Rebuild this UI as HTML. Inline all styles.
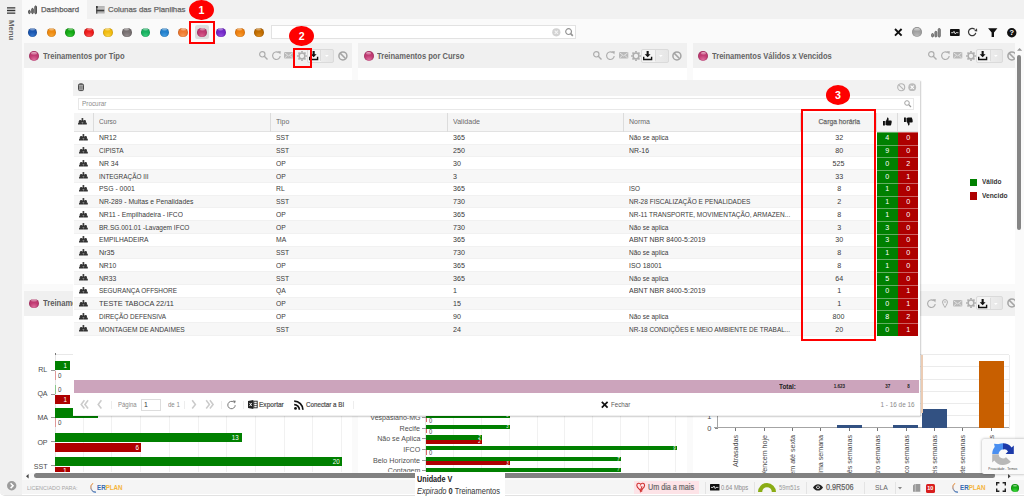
<!DOCTYPE html>
<html lang="pt-BR"><head><meta charset="utf-8"><title>Dashboard</title>
<style>
*{box-sizing:border-box;margin:0;padding:0}
html,body{width:1024px;height:497px;overflow:hidden;background:#fafafa}
body{font-family:"Liberation Sans",sans-serif;font-size:8px;color:#333;position:relative}
.a{position:absolute}
.t{position:absolute;white-space:nowrap;line-height:1}
svg{position:absolute;overflow:visible}
.sph{position:absolute;border-radius:50%}
.sph:after{content:"";position:absolute;left:24%;top:7%;width:52%;height:30%;border-radius:50%;background:linear-gradient(rgba(255,255,255,.62),rgba(255,255,255,.1))}
</style></head><body>

<div class="a" style="left:0.00px;top:0.00px;width:22.00px;height:480.00px;background:#f0f0f0;"></div>
<div class="a" style="left:22.00px;top:0.00px;width:1002.00px;height:18.60px;background:#f1f1f1;"></div>
<div class="a" style="left:22.00px;top:0.00px;width:65.00px;height:19.00px;background:#fafafa;"></div>
<svg style="left:7.40px;top:7.30px" width="9" height="8" viewBox="0 0 9 8"><path d="M0 .9h8.300M0 3.500h8.300M0 6.100h8.300" stroke="#333" stroke-width="1.400"/></svg>
<div class="t" style="left:7px;top:19.700px;font-size:7.700px;font-weight:bold;color:#666;writing-mode:vertical-rl">Menu</div>
<svg style="left:28.00px;top:5.00px" width="10" height="9.5" viewBox="0 0 10 9.5"><g fill="#8a8a8a" stroke="#3c3c3c" stroke-width=".900"><rect x=".650" y="5.300" width="1.500" height="3.300" rx=".750"/><rect x="3.750" y="3.400" width="1.500" height="5.200" rx=".750"/><rect x="6.850" y=".950" width="1.600" height="7.800" rx=".800"/></g></svg>
<div class="t" style="left:41.40px;top:6.00px;font-size:8.00px;color:#5e5e5e;transform:scaleX(0.971);transform-origin:0 50%;-webkit-text-stroke:.25px #5e5e5e;">Dashboard</div>
<svg style="left:96.20px;top:5.90px" width="9" height="8" viewBox="0 0 9 8"><rect x="0" y="0" width="8.700" height="7.600" rx=".600" fill="#b4b4b4"/><path d="M1.600 2.200h7.100" stroke="#d4d4d4" stroke-width=".600"/><rect x="0" y="0" width="1.400" height="7.600" fill="#5a5a5a"/><rect x=".400" y="3.800" width="7.800" height="1.500" fill="#3c3c3c"/><rect x=".300" y=".200" width="1.300" height="1.700" fill="#222"/></svg>
<div class="t" style="left:108.20px;top:6.00px;font-size:8.00px;color:#666;transform:scaleX(0.979);transform-origin:0 50%;-webkit-text-stroke:.25px #666;">Colunas das Planilhas</div>
<div class="a" style="left:195.00px;top:25.00px;width:14.00px;height:14.00px;background:#dddddd;border-radius:2px"></div>
<div class="sph" style="left:27.65px;top:27.55px;width:9.7px;height:9.7px;background:radial-gradient(circle at 50% 92%,#3a7ad0 0%,rgba(255,255,255,0) 48%),radial-gradient(circle at 50% 50%,#1a56b0 0%,#1a56b0 50%,#123c84 100%);box-shadow:inset 0 0 1px rgba(0,0,0,.4)"></div>
<div class="sph" style="left:46.50px;top:27.55px;width:9.7px;height:9.7px;background:radial-gradient(circle at 50% 92%,#f8a838 0%,rgba(255,255,255,0) 48%),radial-gradient(circle at 50% 50%,#ee8a10 0%,#ee8a10 50%,#c86c08 100%);box-shadow:inset 0 0 1px rgba(0,0,0,.4)"></div>
<div class="sph" style="left:65.35px;top:27.55px;width:9.7px;height:9.7px;background:radial-gradient(circle at 50% 92%,#3cc83c 0%,rgba(255,255,255,0) 48%),radial-gradient(circle at 50% 50%,#14a814 0%,#14a814 50%,#0c8010 100%);box-shadow:inset 0 0 1px rgba(0,0,0,.4)"></div>
<div class="sph" style="left:84.20px;top:27.55px;width:9.7px;height:9.7px;background:radial-gradient(circle at 50% 92%,#f85050 0%,rgba(255,255,255,0) 48%),radial-gradient(circle at 50% 50%,#ee1c1c 0%,#ee1c1c 50%,#c01010 100%);box-shadow:inset 0 0 1px rgba(0,0,0,.4)"></div>
<div class="sph" style="left:103.05px;top:27.55px;width:9.7px;height:9.7px;background:radial-gradient(circle at 50% 92%,#f8d448 0%,rgba(255,255,255,0) 48%),radial-gradient(circle at 50% 50%,#f2bc10 0%,#f2bc10 50%,#d09808 100%);box-shadow:inset 0 0 1px rgba(0,0,0,.4)"></div>
<div class="sph" style="left:121.90px;top:27.55px;width:9.7px;height:9.7px;background:radial-gradient(circle at 50% 92%,#958e8f 0%,rgba(255,255,255,0) 48%),radial-gradient(circle at 50% 50%,#777071 0%,#777071 50%,#5a5556 100%);box-shadow:inset 0 0 1px rgba(0,0,0,.4)"></div>
<div class="sph" style="left:140.75px;top:27.55px;width:9.7px;height:9.7px;background:radial-gradient(circle at 50% 92%,#3cd080 0%,rgba(255,255,255,0) 48%),radial-gradient(circle at 50% 50%,#18b060 0%,#18b060 50%,#0e8848 100%);box-shadow:inset 0 0 1px rgba(0,0,0,.4)"></div>
<div class="sph" style="left:159.60px;top:27.55px;width:9.7px;height:9.7px;background:radial-gradient(circle at 50% 92%,#48a0e4 0%,rgba(255,255,255,0) 48%),radial-gradient(circle at 50% 50%,#2280cc 0%,#2280cc 50%,#1660a4 100%);box-shadow:inset 0 0 1px rgba(0,0,0,.4)"></div>
<div class="sph" style="left:178.45px;top:27.55px;width:9.7px;height:9.7px;background:radial-gradient(circle at 50% 92%,#f89c58 0%,rgba(255,255,255,0) 48%),radial-gradient(circle at 50% 50%,#ee7a30 0%,#ee7a30 50%,#c85c1c 100%);box-shadow:inset 0 0 1px rgba(0,0,0,.4)"></div>
<div class="sph" style="left:197.30px;top:27.55px;width:9.7px;height:9.7px;background:radial-gradient(circle at 50% 92%,#dc6090 0%,rgba(255,255,255,0) 48%),radial-gradient(circle at 50% 50%,#c03a72 0%,#c03a72 50%,#982858 100%);box-shadow:inset 0 0 1px rgba(0,0,0,.4)"></div>
<div class="sph" style="left:216.15px;top:27.55px;width:9.7px;height:9.7px;background:radial-gradient(circle at 50% 92%,#9450e0 0%,rgba(255,255,255,0) 48%),radial-gradient(circle at 50% 50%,#7428c8 0%,#7428c8 50%,#5418a0 100%);box-shadow:inset 0 0 1px rgba(0,0,0,.4)"></div>
<div class="sph" style="left:235.00px;top:27.55px;width:9.7px;height:9.7px;background:radial-gradient(circle at 50% 92%,#f8a038 0%,rgba(255,255,255,0) 48%),radial-gradient(circle at 50% 50%,#ee8010 0%,#ee8010 50%,#c86408 100%);box-shadow:inset 0 0 1px rgba(0,0,0,.4)"></div>
<div class="sph" style="left:253.85px;top:27.55px;width:9.7px;height:9.7px;background:radial-gradient(circle at 50% 92%,#dc8c20 0%,rgba(255,255,255,0) 48%),radial-gradient(circle at 50% 50%,#c06c00 0%,#c06c00 50%,#985400 100%);box-shadow:inset 0 0 1px rgba(0,0,0,.4)"></div>
<div class="a" style="left:270.50px;top:25.20px;width:305.30px;height:14.00px;background:#fff;border:1px solid #e2e2e2"></div>
<svg style="left:551.50px;top:27.80px" width="9" height="9" viewBox="0 0 9 9"><circle cx="4.300" cy="4.300" r="4.100" fill="#d2d2d2"/><path d="M2.700 2.700l3.200 3.200M5.900 2.700L2.700 5.900" stroke="#f4f4f4" stroke-width="1.100"/></svg>
<svg style="left:564.80px;top:28.10px" width="9" height="9" viewBox="0 0 9 9"><circle cx="3.600" cy="3.600" r="2.900" fill="none" stroke="#949494" stroke-width="1.200"/><path d="M5.700 5.700L7.800 7.800" stroke="#949494" stroke-width="1.700"/></svg>
<svg style="left:894.00px;top:28.00px" width="9" height="9" viewBox="0 0 9 9"><path d="M1 1l6.600 6.600M7.600 1L1 7.600" stroke="#111" stroke-width="1.900"/></svg>
<div class="sph" style="left:912.00px;top:27.30px;width:10.0px;height:10.0px;background:radial-gradient(circle at 50% 92%,#bcbcbc 0%,rgba(255,255,255,0) 48%),radial-gradient(circle at 50% 50%,#a0a0a0 0%,#a0a0a0 50%,#8c8c8c 100%);box-shadow:inset 0 0 1px rgba(0,0,0,.4)"></div>
<svg style="left:931.00px;top:27.50px" width="10" height="9.5" viewBox="0 0 10 9.5"><g fill="#8c8c8c" stroke="#5c5c5c" stroke-width=".800"><rect x=".600" y="5.500" width="1.900" height="3.500" rx=".950"/><rect x="3.900" y="3.300" width="1.900" height="5.700" rx=".950"/><rect x="7.200" y=".500" width="2.100" height="8.600" rx="1"/></g></svg>
<svg style="left:950.00px;top:29.00px" width="10" height="7" viewBox="0 0 10 7"><rect width="9.700" height="7" rx=".800" fill="#111"/><path d="M1.200 3.700h2l.800-1.400 1.200 2.600.900-1.200h2.300" stroke="#fff" stroke-width=".800" fill="none"/></svg>
<svg style="left:968.30px;top:27.40px" width="10" height="10" viewBox="0 0 10 10"><path d="M7.770 5.960A3.700 3.700 0 1 1 6.820 2.380" fill="none" stroke="#3a3a3a" stroke-width="1.250"/><path d="M9 1.200l.200 3.300-3.100-.500z" fill="#3a3a3a"/></svg>
<svg style="left:987.60px;top:27.70px" width="10" height="10" viewBox="0 0 10 10"><path d="M.100 .300h9.300L6 4.400v4.600H3.600V4.400z" fill="#111"/></svg>
<svg style="left:1006.60px;top:27.60px" width="10" height="10" viewBox="0 0 10 10"><circle cx="4.750" cy="4.750" r="4.700" fill="#111"/><text x="4.750" y="7.400" font-size="7.400" font-weight="bold" fill="#fff" text-anchor="middle" font-family="Liberation Sans, sans-serif">?</text></svg>
<div class="a" style="left:23.70px;top:43.00px;width:328.40px;height:25.00px;background:#f0f0f0;"></div>
<div class="a" style="left:23.70px;top:68.00px;width:328.40px;height:216.00px;background:#fff;"></div>
<div class="sph" style="left:29.10px;top:50.90px;width:9.8px;height:9.8px;background:radial-gradient(circle at 50% 92%,#e070a0 0%,rgba(255,255,255,0) 48%),radial-gradient(circle at 50% 50%,#c03a72 0%,#c03a72 50%,#982858 100%);box-shadow:inset 0 0 1px rgba(0,0,0,.4)"></div>
<div class="t" style="left:42.70px;top:53.00px;font-size:8.20px;color:#646464;transform:scaleX(0.926);transform-origin:0 50%;font-weight:bold;">Treinamentos por Tipo</div>
<svg style="left:337.50px;top:50.75px" width="10" height="10" viewBox="0 0 10 10"><circle cx="4.900" cy="4.900" r="4" fill="none" stroke="#a4a4a4" stroke-width="1.500"/><path d="M2.100 2.100l5.600 5.600" stroke="#a4a4a4" stroke-width="1.500"/></svg>
<div class="a" style="left:306.70px;top:48.65px;width:27.300px;height:14px;border:1px solid #dadada;border-radius:2px;background:linear-gradient(90deg,#f4f4f4 0,#f4f4f4 50%,#ececec 51%,#e6e6e6 100%)"></div>
<div class="a" style="left:320.40px;top:50.25px;width:1.00px;height:10.80px;background:#dcdcdc;"></div>
<svg style="left:324.80px;top:54.95px" width="4" height="3" viewBox="0 0 4 3"><path d="M0 0h3.700L1.850 2.100z" fill="#fff"/></svg>
<svg style="left:308.50px;top:50.85px" width="10" height="10" viewBox="0 0 10 10"><path d="M3.600 0h2.100v3.200h1.900L4.650 6.300 1.700 3.200h1.900z" fill="#111"/><path d="M.700 5.800v2.700h7.900V5.800" fill="none" stroke="#111" stroke-width="1.400"/></svg>
<svg style="left:296.80px;top:50.65px" width="10" height="10" viewBox="0 0 10 10"><circle cx="5" cy="5" r="2.900" fill="none" stroke="#adadad" stroke-width="1.500"/><g stroke="#adadad" stroke-width="1.700"><path d="M5 .1v1.500M5 8.400v1.500M.1 5h1.500M8.400 5h1.500M1.500 1.500l1.100 1.100M7.400 7.400l1.100 1.100M1.500 8.500l1.100-1.100M7.400 2.600l1.100-1.100"/></g></svg>
<svg style="left:284.20px;top:52.35px" width="10" height="7" viewBox="0 0 10 7"><rect width="9.300" height="6.600" rx=".800" fill="#b9b9b9"/><path d="M.600 .800l4.050 3.100 4.050-3.100M.600 6l2.900-2.600M8.700 6L5.800 3.400" stroke="#ececec" stroke-width=".750" fill="none"/></svg>
<svg style="left:271.50px;top:51.05px" width="10" height="10" viewBox="0 0 10 10"><path d="M8.200 5A3.800 3.800 0 1 1 6.700 1.700" fill="none" stroke="#adadad" stroke-width="1.150"/><path d="M5.600 .200l3.300 .100-.600 3.200z" fill="#adadad"/></svg>
<svg style="left:258.80px;top:51.25px" width="10" height="10" viewBox="0 0 10 10"><circle cx="3.300" cy="3.300" r="2.700" fill="none" stroke="#adadad" stroke-width="1.150"/><path d="M5.300 5.300L8.500 8.500" stroke="#adadad" stroke-width="1.400"/></svg>
<div class="a" style="left:23.70px;top:291.20px;width:328.40px;height:24.40px;background:#f0f0f0;"></div>
<div class="a" style="left:23.70px;top:315.60px;width:328.40px;height:158.00px;background:#fff;"></div>
<div class="sph" style="left:29.10px;top:298.60px;width:9.8px;height:9.8px;background:radial-gradient(circle at 50% 92%,#e070a0 0%,rgba(255,255,255,0) 48%),radial-gradient(circle at 50% 50%,#c03a72 0%,#c03a72 50%,#982858 100%);box-shadow:inset 0 0 1px rgba(0,0,0,.4)"></div>
<div class="t" style="left:42.70px;top:300.00px;font-size:8.20px;color:#5c5c5c;transform:scaleX(0.935);transform-origin:0 50%;font-weight:bold;">Treinamentos por Situação</div>
<svg style="left:337.50px;top:298.40px" width="10" height="10" viewBox="0 0 10 10"><circle cx="4.900" cy="4.900" r="4" fill="none" stroke="#a4a4a4" stroke-width="1.500"/><path d="M2.100 2.100l5.600 5.600" stroke="#a4a4a4" stroke-width="1.500"/></svg>
<div class="a" style="left:306.70px;top:296.30px;width:27.300px;height:14px;border:1px solid #dadada;border-radius:2px;background:linear-gradient(90deg,#f4f4f4 0,#f4f4f4 50%,#ececec 51%,#e6e6e6 100%)"></div>
<div class="a" style="left:320.40px;top:297.90px;width:1.00px;height:10.80px;background:#dcdcdc;"></div>
<svg style="left:324.80px;top:302.60px" width="4" height="3" viewBox="0 0 4 3"><path d="M0 0h3.700L1.850 2.100z" fill="#fff"/></svg>
<svg style="left:308.50px;top:298.50px" width="10" height="10" viewBox="0 0 10 10"><path d="M3.600 0h2.100v3.200h1.900L4.650 6.300 1.700 3.200h1.900z" fill="#111"/><path d="M.700 5.800v2.700h7.900V5.800" fill="none" stroke="#111" stroke-width="1.400"/></svg>
<svg style="left:296.80px;top:298.30px" width="10" height="10" viewBox="0 0 10 10"><circle cx="5" cy="5" r="2.900" fill="none" stroke="#adadad" stroke-width="1.500"/><g stroke="#adadad" stroke-width="1.700"><path d="M5 .1v1.500M5 8.400v1.500M.1 5h1.500M8.400 5h1.500M1.500 1.500l1.100 1.100M7.400 7.400l1.100 1.100M1.500 8.500l1.100-1.100M7.400 2.600l1.100-1.100"/></g></svg>
<svg style="left:284.20px;top:300.00px" width="10" height="7" viewBox="0 0 10 7"><rect width="9.300" height="6.600" rx=".800" fill="#b9b9b9"/><path d="M.600 .800l4.050 3.100 4.050-3.100M.600 6l2.900-2.600M8.700 6L5.800 3.400" stroke="#ececec" stroke-width=".750" fill="none"/></svg>
<svg style="left:272.70px;top:298.70px" width="7" height="10" viewBox="0 0 7 10"><path d="M3 .600a2.450 2.450 0 0 1 2.450 2.450c0 1.800-2.450 5.400-2.450 5.400S.550 4.850 .550 3.050A2.450 2.450 0 0 1 3 .600z" fill="none" stroke="#adadad" stroke-width="1"/><circle cx="3" cy="3" r=".800" fill="#adadad"/></svg>
<svg style="left:258.10px;top:298.70px" width="10" height="10" viewBox="0 0 10 10"><path d="M8.200 5A3.800 3.800 0 1 1 6.700 1.700" fill="none" stroke="#adadad" stroke-width="1.150"/><path d="M5.600 .200l3.300 .100-.600 3.200z" fill="#adadad"/></svg>
<div class="a" style="left:358.40px;top:43.00px;width:328.30px;height:25.00px;background:#f0f0f0;"></div>
<div class="a" style="left:358.40px;top:68.00px;width:328.30px;height:216.00px;background:#fff;"></div>
<div class="sph" style="left:363.80px;top:50.90px;width:9.8px;height:9.8px;background:radial-gradient(circle at 50% 92%,#e070a0 0%,rgba(255,255,255,0) 48%),radial-gradient(circle at 50% 50%,#c03a72 0%,#c03a72 50%,#982858 100%);box-shadow:inset 0 0 1px rgba(0,0,0,.4)"></div>
<div class="t" style="left:377.40px;top:53.00px;font-size:8.20px;color:#646464;transform:scaleX(0.922);transform-origin:0 50%;font-weight:bold;">Treinamentos por Curso</div>
<svg style="left:672.10px;top:50.75px" width="10" height="10" viewBox="0 0 10 10"><circle cx="4.900" cy="4.900" r="4" fill="none" stroke="#a4a4a4" stroke-width="1.500"/><path d="M2.100 2.100l5.600 5.600" stroke="#a4a4a4" stroke-width="1.500"/></svg>
<div class="a" style="left:641.30px;top:48.65px;width:27.300px;height:14px;border:1px solid #dadada;border-radius:2px;background:linear-gradient(90deg,#f4f4f4 0,#f4f4f4 50%,#ececec 51%,#e6e6e6 100%)"></div>
<div class="a" style="left:655.00px;top:50.25px;width:1.00px;height:10.80px;background:#dcdcdc;"></div>
<svg style="left:659.40px;top:54.95px" width="4" height="3" viewBox="0 0 4 3"><path d="M0 0h3.700L1.850 2.100z" fill="#fff"/></svg>
<svg style="left:643.10px;top:50.85px" width="10" height="10" viewBox="0 0 10 10"><path d="M3.600 0h2.100v3.200h1.900L4.650 6.300 1.700 3.200h1.900z" fill="#111"/><path d="M.700 5.800v2.700h7.900V5.800" fill="none" stroke="#111" stroke-width="1.400"/></svg>
<svg style="left:631.40px;top:50.65px" width="10" height="10" viewBox="0 0 10 10"><circle cx="5" cy="5" r="2.900" fill="none" stroke="#adadad" stroke-width="1.500"/><g stroke="#adadad" stroke-width="1.700"><path d="M5 .1v1.500M5 8.400v1.500M.1 5h1.500M8.400 5h1.500M1.500 1.500l1.100 1.100M7.400 7.400l1.100 1.100M1.500 8.500l1.100-1.100M7.400 2.600l1.100-1.100"/></g></svg>
<svg style="left:618.80px;top:52.35px" width="10" height="7" viewBox="0 0 10 7"><rect width="9.300" height="6.600" rx=".800" fill="#b9b9b9"/><path d="M.600 .800l4.050 3.100 4.050-3.100M.600 6l2.900-2.600M8.700 6L5.800 3.400" stroke="#ececec" stroke-width=".750" fill="none"/></svg>
<svg style="left:606.10px;top:51.05px" width="10" height="10" viewBox="0 0 10 10"><path d="M8.200 5A3.800 3.800 0 1 1 6.700 1.700" fill="none" stroke="#adadad" stroke-width="1.150"/><path d="M5.600 .200l3.300 .100-.600 3.200z" fill="#adadad"/></svg>
<svg style="left:593.40px;top:51.25px" width="10" height="10" viewBox="0 0 10 10"><circle cx="3.300" cy="3.300" r="2.700" fill="none" stroke="#adadad" stroke-width="1.150"/><path d="M5.300 5.300L8.500 8.500" stroke="#adadad" stroke-width="1.400"/></svg>
<div class="a" style="left:358.40px;top:291.20px;width:328.30px;height:24.40px;background:#f0f0f0;"></div>
<div class="a" style="left:358.40px;top:315.60px;width:328.30px;height:158.00px;background:#fff;"></div>
<div class="sph" style="left:363.80px;top:298.60px;width:9.8px;height:9.8px;background:radial-gradient(circle at 50% 92%,#e070a0 0%,rgba(255,255,255,0) 48%),radial-gradient(circle at 50% 50%,#c03a72 0%,#c03a72 50%,#982858 100%);box-shadow:inset 0 0 1px rgba(0,0,0,.4)"></div>
<div class="t" style="left:377.40px;top:300.00px;font-size:8.20px;color:#5c5c5c;transform:scaleX(0.935);transform-origin:0 50%;font-weight:bold;">Treinamentos por Unidade</div>
<svg style="left:672.10px;top:298.40px" width="10" height="10" viewBox="0 0 10 10"><circle cx="4.900" cy="4.900" r="4" fill="none" stroke="#a4a4a4" stroke-width="1.500"/><path d="M2.100 2.100l5.600 5.600" stroke="#a4a4a4" stroke-width="1.500"/></svg>
<div class="a" style="left:641.30px;top:296.30px;width:27.300px;height:14px;border:1px solid #dadada;border-radius:2px;background:linear-gradient(90deg,#f4f4f4 0,#f4f4f4 50%,#ececec 51%,#e6e6e6 100%)"></div>
<div class="a" style="left:655.00px;top:297.90px;width:1.00px;height:10.80px;background:#dcdcdc;"></div>
<svg style="left:659.40px;top:302.60px" width="4" height="3" viewBox="0 0 4 3"><path d="M0 0h3.700L1.850 2.100z" fill="#fff"/></svg>
<svg style="left:643.10px;top:298.50px" width="10" height="10" viewBox="0 0 10 10"><path d="M3.600 0h2.100v3.200h1.900L4.650 6.300 1.700 3.200h1.900z" fill="#111"/><path d="M.700 5.800v2.700h7.900V5.800" fill="none" stroke="#111" stroke-width="1.400"/></svg>
<svg style="left:631.40px;top:298.30px" width="10" height="10" viewBox="0 0 10 10"><circle cx="5" cy="5" r="2.900" fill="none" stroke="#adadad" stroke-width="1.500"/><g stroke="#adadad" stroke-width="1.700"><path d="M5 .1v1.500M5 8.400v1.500M.1 5h1.500M8.400 5h1.500M1.500 1.500l1.100 1.100M7.400 7.400l1.100 1.100M1.500 8.500l1.100-1.100M7.400 2.600l1.100-1.100"/></g></svg>
<svg style="left:618.80px;top:300.00px" width="10" height="7" viewBox="0 0 10 7"><rect width="9.300" height="6.600" rx=".800" fill="#b9b9b9"/><path d="M.600 .800l4.050 3.100 4.050-3.100M.600 6l2.900-2.600M8.700 6L5.800 3.400" stroke="#ececec" stroke-width=".750" fill="none"/></svg>
<svg style="left:607.30px;top:298.70px" width="7" height="10" viewBox="0 0 7 10"><path d="M3 .600a2.450 2.450 0 0 1 2.450 2.450c0 1.800-2.450 5.400-2.450 5.400S.550 4.850 .550 3.050A2.450 2.450 0 0 1 3 .600z" fill="none" stroke="#adadad" stroke-width="1"/><circle cx="3" cy="3" r=".800" fill="#adadad"/></svg>
<svg style="left:592.70px;top:298.70px" width="10" height="10" viewBox="0 0 10 10"><path d="M8.200 5A3.800 3.800 0 1 1 6.700 1.700" fill="none" stroke="#adadad" stroke-width="1.150"/><path d="M5.600 .200l3.300 .100-.600 3.200z" fill="#adadad"/></svg>
<div class="a" style="left:692.90px;top:43.00px;width:328.30px;height:25.00px;background:#f0f0f0;"></div>
<div class="a" style="left:692.90px;top:68.00px;width:328.30px;height:216.00px;background:#fff;"></div>
<div class="sph" style="left:698.30px;top:50.90px;width:9.8px;height:9.8px;background:radial-gradient(circle at 50% 92%,#e070a0 0%,rgba(255,255,255,0) 48%),radial-gradient(circle at 50% 50%,#c03a72 0%,#c03a72 50%,#982858 100%);box-shadow:inset 0 0 1px rgba(0,0,0,.4)"></div>
<div class="t" style="left:711.90px;top:53.00px;font-size:8.20px;color:#646464;transform:scaleX(0.924);transform-origin:0 50%;font-weight:bold;">Treinamentos Válidos x Vencidos</div>
<svg style="left:1006.60px;top:50.75px" width="10" height="10" viewBox="0 0 10 10"><circle cx="4.900" cy="4.900" r="4" fill="none" stroke="#a4a4a4" stroke-width="1.500"/><path d="M2.100 2.100l5.600 5.600" stroke="#a4a4a4" stroke-width="1.500"/></svg>
<div class="a" style="left:975.80px;top:48.65px;width:27.300px;height:14px;border:1px solid #dadada;border-radius:2px;background:linear-gradient(90deg,#f4f4f4 0,#f4f4f4 50%,#ececec 51%,#e6e6e6 100%)"></div>
<div class="a" style="left:989.50px;top:50.25px;width:1.00px;height:10.80px;background:#dcdcdc;"></div>
<svg style="left:993.90px;top:54.95px" width="4" height="3" viewBox="0 0 4 3"><path d="M0 0h3.700L1.850 2.100z" fill="#fff"/></svg>
<svg style="left:977.60px;top:50.85px" width="10" height="10" viewBox="0 0 10 10"><path d="M3.600 0h2.100v3.200h1.900L4.650 6.300 1.700 3.200h1.900z" fill="#111"/><path d="M.700 5.800v2.700h7.900V5.800" fill="none" stroke="#111" stroke-width="1.400"/></svg>
<svg style="left:965.90px;top:50.65px" width="10" height="10" viewBox="0 0 10 10"><circle cx="5" cy="5" r="2.900" fill="none" stroke="#adadad" stroke-width="1.500"/><g stroke="#adadad" stroke-width="1.700"><path d="M5 .1v1.500M5 8.400v1.500M.1 5h1.500M8.400 5h1.500M1.500 1.500l1.100 1.100M7.400 7.400l1.100 1.100M1.500 8.500l1.100-1.100M7.400 2.600l1.100-1.100"/></g></svg>
<svg style="left:953.30px;top:52.35px" width="10" height="7" viewBox="0 0 10 7"><rect width="9.300" height="6.600" rx=".800" fill="#b9b9b9"/><path d="M.600 .800l4.050 3.100 4.050-3.100M.600 6l2.900-2.600M8.700 6L5.800 3.400" stroke="#ececec" stroke-width=".750" fill="none"/></svg>
<svg style="left:940.60px;top:51.05px" width="10" height="10" viewBox="0 0 10 10"><path d="M8.200 5A3.800 3.800 0 1 1 6.700 1.700" fill="none" stroke="#adadad" stroke-width="1.150"/><path d="M5.600 .200l3.300 .100-.600 3.200z" fill="#adadad"/></svg>
<svg style="left:927.90px;top:51.25px" width="10" height="10" viewBox="0 0 10 10"><circle cx="3.300" cy="3.300" r="2.700" fill="none" stroke="#adadad" stroke-width="1.150"/><path d="M5.300 5.300L8.500 8.500" stroke="#adadad" stroke-width="1.400"/></svg>
<div class="a" style="left:692.90px;top:291.20px;width:328.30px;height:24.40px;background:#f0f0f0;"></div>
<div class="a" style="left:692.90px;top:315.60px;width:328.30px;height:158.00px;background:#fff;"></div>
<div class="sph" style="left:698.30px;top:298.60px;width:9.8px;height:9.8px;background:radial-gradient(circle at 50% 92%,#e070a0 0%,rgba(255,255,255,0) 48%),radial-gradient(circle at 50% 50%,#c03a72 0%,#c03a72 50%,#982858 100%);box-shadow:inset 0 0 1px rgba(0,0,0,.4)"></div>
<div class="t" style="left:711.90px;top:300.00px;font-size:8.20px;color:#5c5c5c;transform:scaleX(0.935);transform-origin:0 50%;font-weight:bold;">Vencimento dos Treinamentos</div>
<svg style="left:1006.60px;top:298.40px" width="10" height="10" viewBox="0 0 10 10"><circle cx="4.900" cy="4.900" r="4" fill="none" stroke="#a4a4a4" stroke-width="1.500"/><path d="M2.100 2.100l5.600 5.600" stroke="#a4a4a4" stroke-width="1.500"/></svg>
<div class="a" style="left:975.80px;top:296.30px;width:27.300px;height:14px;border:1px solid #dadada;border-radius:2px;background:linear-gradient(90deg,#f4f4f4 0,#f4f4f4 50%,#ececec 51%,#e6e6e6 100%)"></div>
<div class="a" style="left:989.50px;top:297.90px;width:1.00px;height:10.80px;background:#dcdcdc;"></div>
<svg style="left:993.90px;top:302.60px" width="4" height="3" viewBox="0 0 4 3"><path d="M0 0h3.700L1.850 2.100z" fill="#fff"/></svg>
<svg style="left:977.60px;top:298.50px" width="10" height="10" viewBox="0 0 10 10"><path d="M3.600 0h2.100v3.200h1.900L4.650 6.300 1.700 3.200h1.900z" fill="#111"/><path d="M.700 5.800v2.700h7.900V5.800" fill="none" stroke="#111" stroke-width="1.400"/></svg>
<svg style="left:965.90px;top:298.30px" width="10" height="10" viewBox="0 0 10 10"><circle cx="5" cy="5" r="2.900" fill="none" stroke="#adadad" stroke-width="1.500"/><g stroke="#adadad" stroke-width="1.700"><path d="M5 .1v1.500M5 8.400v1.500M.1 5h1.500M8.400 5h1.500M1.500 1.500l1.100 1.100M7.400 7.400l1.100 1.100M1.500 8.500l1.100-1.100M7.400 2.600l1.100-1.100"/></g></svg>
<svg style="left:953.30px;top:300.00px" width="10" height="7" viewBox="0 0 10 7"><rect width="9.300" height="6.600" rx=".800" fill="#b9b9b9"/><path d="M.600 .800l4.050 3.100 4.050-3.100M.600 6l2.900-2.600M8.700 6L5.800 3.400" stroke="#ececec" stroke-width=".750" fill="none"/></svg>
<svg style="left:941.80px;top:298.70px" width="7" height="10" viewBox="0 0 7 10"><path d="M3 .600a2.450 2.450 0 0 1 2.450 2.450c0 1.800-2.450 5.400-2.450 5.400S.550 4.850 .550 3.050A2.450 2.450 0 0 1 3 .600z" fill="none" stroke="#adadad" stroke-width="1"/><circle cx="3" cy="3" r=".800" fill="#adadad"/></svg>
<svg style="left:927.20px;top:298.70px" width="10" height="10" viewBox="0 0 10 10"><path d="M8.200 5A3.800 3.800 0 1 1 6.700 1.700" fill="none" stroke="#adadad" stroke-width="1.150"/><path d="M5.600 .200l3.300 .100-.600 3.200z" fill="#adadad"/></svg>
<div class="a" style="left:969.70px;top:178.60px;width:7.20px;height:7.20px;background:#008000;"></div>
<div class="a" style="left:969.70px;top:192.40px;width:7.20px;height:7.20px;background:#ae0000;"></div>
<div class="t" style="left:981.50px;top:178.00px;font-size:7.80px;color:#333;transform:scaleX(0.829);transform-origin:0 50%;font-weight:bold;">Válido</div>
<div class="t" style="left:981.50px;top:192.00px;font-size:7.80px;color:#333;transform:scaleX(0.853);transform-origin:0 50%;font-weight:bold;">Vencido</div>
<div class="a" style="left:55.00px;top:354.20px;width:297.00px;height:1.00px;background:#e8e8e8;"></div>
<div class="a" style="left:82.54px;top:354.50px;width:1.00px;height:117.50px;background:#f1f1f1;"></div>
<div class="a" style="left:111.28px;top:354.50px;width:1.00px;height:117.50px;background:#f1f1f1;"></div>
<div class="a" style="left:140.02px;top:354.50px;width:1.00px;height:117.50px;background:#f1f1f1;"></div>
<div class="a" style="left:168.76px;top:354.50px;width:1.00px;height:117.50px;background:#f1f1f1;"></div>
<div class="a" style="left:197.50px;top:354.50px;width:1.00px;height:117.50px;background:#f1f1f1;"></div>
<div class="a" style="left:226.24px;top:354.50px;width:1.00px;height:117.50px;background:#f1f1f1;"></div>
<div class="a" style="left:254.98px;top:354.50px;width:1.00px;height:117.50px;background:#f1f1f1;"></div>
<div class="a" style="left:283.72px;top:354.50px;width:1.00px;height:117.50px;background:#f1f1f1;"></div>
<div class="a" style="left:312.46px;top:354.50px;width:1.00px;height:117.50px;background:#f1f1f1;"></div>
<div class="a" style="left:341.20px;top:354.50px;width:1.00px;height:117.50px;background:#f1f1f1;"></div>
<div class="a" style="left:54.50px;top:354.50px;width:1.00px;height:117.20px;background:#e4e4e4;"></div>
<div class="a" style="left:54.50px;top:353.30px;width:1.00px;height:1.80px;background:#777;"></div>
<div class="t" style="left:37.47px;top:366.00px;font-size:8.00px;color:#4a4a4a;transform:scaleX(0.880);transform-origin:100% 50%;">RL</div>
<div class="a" style="left:50.80px;top:369.90px;width:4.20px;height:1.00px;background:#999;"></div>
<div class="a" style="left:55.00px;top:361.10px;width:14.75px;height:9.40px;background:#008000;"></div>
<div class="t" style="left:63.11px;top:363.00px;font-size:6.90px;color:#fff;transform:scaleX(0.900);transform-origin:100% 50%;">1</div>
<div class="a" style="left:54.60px;top:371.20px;width:1.70px;height:9.20px;background:#e09898;"></div>
<div class="t" style="left:58.30px;top:373.00px;font-size:6.90px;color:#444;transform:scaleX(0.900);transform-origin:0 50%;">0</div>
<div class="t" style="left:36.14px;top:390.00px;font-size:8.00px;color:#4a4a4a;transform:scaleX(0.880);transform-origin:100% 50%;">QA</div>
<div class="a" style="left:50.80px;top:393.70px;width:4.20px;height:1.00px;background:#999;"></div>
<div class="a" style="left:54.60px;top:384.90px;width:1.70px;height:9.40px;background:#8cc88c;"></div>
<div class="t" style="left:58.30px;top:387.00px;font-size:6.90px;color:#444;transform:scaleX(0.900);transform-origin:0 50%;">0</div>
<div class="a" style="left:55.00px;top:395.00px;width:14.75px;height:9.20px;background:#ae0000;"></div>
<div class="t" style="left:63.11px;top:397.00px;font-size:6.90px;color:#fff;transform:scaleX(0.900);transform-origin:100% 50%;">1</div>
<div class="t" style="left:35.70px;top:414.00px;font-size:8.00px;color:#4a4a4a;transform:scaleX(0.880);transform-origin:100% 50%;">MA</div>
<div class="a" style="left:50.80px;top:417.00px;width:4.20px;height:1.00px;background:#999;"></div>
<div class="a" style="left:55.00px;top:408.20px;width:43.45px;height:9.40px;background:#008000;"></div>
<div class="t" style="left:91.81px;top:410.00px;font-size:6.90px;color:#fff;transform:scaleX(0.900);transform-origin:100% 50%;">3</div>
<div class="a" style="left:54.60px;top:418.30px;width:1.70px;height:9.20px;background:#e09898;"></div>
<div class="t" style="left:58.30px;top:420.00px;font-size:6.90px;color:#444;transform:scaleX(0.900);transform-origin:0 50%;">0</div>
<div class="t" style="left:36.14px;top:439.00px;font-size:8.00px;color:#4a4a4a;transform:scaleX(0.880);transform-origin:100% 50%;">OP</div>
<div class="a" style="left:50.80px;top:441.40px;width:4.20px;height:1.00px;background:#999;"></div>
<div class="a" style="left:55.00px;top:432.60px;width:186.55px;height:9.40px;background:#008000;"></div>
<div class="t" style="left:231.48px;top:435.00px;font-size:6.90px;color:#fff;transform:scaleX(0.900);transform-origin:100% 50%;">13</div>
<div class="a" style="left:55.00px;top:442.70px;width:86.10px;height:9.20px;background:#ae0000;"></div>
<div class="t" style="left:134.86px;top:445.00px;font-size:6.90px;color:#fff;transform:scaleX(0.900);transform-origin:100% 50%;">6</div>
<div class="t" style="left:32.14px;top:463.00px;font-size:8.00px;color:#4a4a4a;transform:scaleX(0.880);transform-origin:100% 50%;">SST</div>
<div class="a" style="left:50.80px;top:465.30px;width:4.20px;height:1.00px;background:#999;"></div>
<div class="a" style="left:55.00px;top:456.50px;width:287.00px;height:9.40px;background:#008000;"></div>
<div class="t" style="left:331.93px;top:459.00px;font-size:6.90px;color:#fff;transform:scaleX(0.900);transform-origin:100% 50%;">20</div>
<div class="a" style="left:55.00px;top:466.60px;width:14.75px;height:5.10px;background:#ae0000;"></div>
<div class="a" style="left:55px;top:466.60px;width:14.35px;height:5.10px;overflow:hidden">
<div class="t" style="right:2.400px;top:1.300px;font-size:6.900px;color:#fff">1</div></div>
<div class="a" style="left:453.25px;top:415.00px;width:1.00px;height:57.00px;background:#f1f1f1;"></div>
<div class="a" style="left:481.00px;top:415.00px;width:1.00px;height:57.00px;background:#f1f1f1;"></div>
<div class="a" style="left:508.75px;top:415.00px;width:1.00px;height:57.00px;background:#f1f1f1;"></div>
<div class="a" style="left:536.50px;top:415.00px;width:1.00px;height:57.00px;background:#f1f1f1;"></div>
<div class="a" style="left:564.25px;top:415.00px;width:1.00px;height:57.00px;background:#f1f1f1;"></div>
<div class="a" style="left:592.00px;top:415.00px;width:1.00px;height:57.00px;background:#f1f1f1;"></div>
<div class="a" style="left:619.75px;top:415.00px;width:1.00px;height:57.00px;background:#f1f1f1;"></div>
<div class="a" style="left:647.50px;top:415.00px;width:1.00px;height:57.00px;background:#f1f1f1;"></div>
<div class="a" style="left:675.25px;top:415.00px;width:1.00px;height:57.00px;background:#f1f1f1;"></div>
<div class="a" style="left:425.40px;top:415.00px;width:1.00px;height:57.00px;background:#e4e4e4;"></div>
<div class="a" style="left:358.400px;top:415px;width:328.300px;height:56.800px;overflow:hidden">
<div class="t" style="left:4.27px;top:-1.00px;font-size:8.10px;color:#505050;transform:scaleX(0.873);transform-origin:100% 50%;">Vespasiano-MG</div>
<div class="a" style="left:63.60px;top:1.50px;width:4.00px;height:1.00px;background:#999;"></div>
<div class="a" style="left:67.60px;top:-1.30px;width:83.55px;height:4.30px;background:#008000;"></div>
<div class="t" style="left:147.39px;top:-1.00px;font-size:4.60px;color:#fff;transform:scaleX(0.920);transform-origin:100% 50%;font-style:italic;">3</div>
<div class="a" style="left:67.60px;top:3.00px;width:1.00px;height:4.30px;background:#d66;"></div>
<div class="t" style="left:71.10px;top:3.00px;font-size:6.40px;color:#444;transform:scaleX(0.900);transform-origin:0 50%;">0</div>
<div class="t" style="left:38.94px;top:10.00px;font-size:8.10px;color:#505050;transform:scaleX(0.893);transform-origin:100% 50%;">Recife</div>
<div class="a" style="left:63.60px;top:12.50px;width:4.00px;height:1.00px;background:#999;"></div>
<div class="a" style="left:67.60px;top:9.70px;width:83.55px;height:4.30px;background:#008000;"></div>
<div class="t" style="left:147.39px;top:10.00px;font-size:4.60px;color:#fff;transform:scaleX(0.920);transform-origin:100% 50%;font-style:italic;">3</div>
<div class="a" style="left:67.60px;top:14.00px;width:1.00px;height:4.30px;background:#d66;"></div>
<div class="t" style="left:71.10px;top:14.00px;font-size:6.40px;color:#444;transform:scaleX(0.900);transform-origin:0 50%;">0</div>
<div class="t" style="left:12.37px;top:20.00px;font-size:8.10px;color:#505050;transform:scaleX(0.876);transform-origin:100% 50%;">Não se Aplica</div>
<div class="a" style="left:63.60px;top:23.20px;width:4.00px;height:1.00px;background:#999;"></div>
<div class="a" style="left:67.60px;top:20.40px;width:55.70px;height:4.30px;background:#008000;"></div>
<div class="t" style="left:119.54px;top:21.00px;font-size:4.60px;color:#fff;transform:scaleX(0.920);transform-origin:100% 50%;font-style:italic;">2</div>
<div class="a" style="left:67.60px;top:24.70px;width:55.70px;height:4.30px;background:#ae0000;"></div>
<div class="t" style="left:119.54px;top:25.00px;font-size:4.60px;color:#fff;transform:scaleX(0.920);transform-origin:100% 50%;font-style:italic;">2</div>
<div class="t" style="left:42.55px;top:31.00px;font-size:8.10px;color:#505050;transform:scaleX(0.884);transform-origin:100% 50%;">IFCO</div>
<div class="a" style="left:63.60px;top:33.90px;width:4.00px;height:1.00px;background:#999;"></div>
<div class="a" style="left:67.60px;top:31.10px;width:250.65px;height:4.30px;background:#008000;"></div>
<div class="t" style="left:314.49px;top:32.00px;font-size:4.60px;color:#fff;transform:scaleX(0.920);transform-origin:100% 50%;font-style:italic;">9</div>
<div class="a" style="left:67.60px;top:35.40px;width:1.00px;height:4.30px;background:#d66;"></div>
<div class="t" style="left:71.10px;top:35.00px;font-size:6.40px;color:#444;transform:scaleX(0.900);transform-origin:0 50%;">0</div>
<div class="t" style="left:8.77px;top:42.00px;font-size:8.10px;color:#505050;transform:scaleX(0.888);transform-origin:100% 50%;">Belo Horizonte</div>
<div class="a" style="left:63.60px;top:44.60px;width:4.00px;height:1.00px;background:#999;"></div>
<div class="a" style="left:67.60px;top:41.80px;width:194.95px;height:4.30px;background:#008000;"></div>
<div class="t" style="left:258.79px;top:43.00px;font-size:4.60px;color:#fff;transform:scaleX(0.920);transform-origin:100% 50%;font-style:italic;">7</div>
<div class="a" style="left:67.60px;top:46.10px;width:83.55px;height:4.30px;background:#ae0000;"></div>
<div class="t" style="left:147.39px;top:47.00px;font-size:4.60px;color:#fff;transform:scaleX(0.920);transform-origin:100% 50%;font-style:italic;">3</div>
<div class="t" style="left:24.53px;top:52.00px;font-size:8.10px;color:#505050;transform:scaleX(0.870);transform-origin:100% 50%;">Contagem</div>
<div class="a" style="left:63.60px;top:55.30px;width:4.00px;height:1.00px;background:#999;"></div>
<div class="a" style="left:67.60px;top:52.50px;width:194.95px;height:4.30px;background:#008000;"></div>
<div class="t" style="left:258.79px;top:53.00px;font-size:4.60px;color:#fff;transform:scaleX(0.920);transform-origin:100% 50%;font-style:italic;">7</div>
<div class="a" style="left:67.60px;top:56.80px;width:1.00px;height:4.30px;background:#d66;"></div>
<div class="t" style="left:71.10px;top:57.00px;font-size:6.40px;color:#444;transform:scaleX(0.900);transform-origin:0 50%;">0</div>
</div>
<div class="a" style="left:718.00px;top:354.20px;width:291.00px;height:1.00px;background:#ebebeb;"></div>
<div class="a" style="left:718.00px;top:366.42px;width:291.00px;height:1.00px;background:#ebebeb;"></div>
<div class="a" style="left:718.00px;top:378.64px;width:291.00px;height:1.00px;background:#ebebeb;"></div>
<div class="a" style="left:718.00px;top:390.86px;width:291.00px;height:1.00px;background:#ebebeb;"></div>
<div class="a" style="left:718.00px;top:403.08px;width:291.00px;height:1.00px;background:#ebebeb;"></div>
<div class="a" style="left:718.00px;top:415.30px;width:291.00px;height:1.00px;background:#ebebeb;"></div>
<div class="a" style="left:1008.50px;top:354.50px;width:1.00px;height:74.00px;background:#ebebeb;"></div>
<div class="a" style="left:717.20px;top:354.00px;width:1.00px;height:74.50px;background:#a4a4a4;"></div>
<div class="a" style="left:714.00px;top:427.40px;width:295.00px;height:1.00px;background:#a4a4a4;"></div>
<div class="a" style="left:714.50px;top:427.60px;width:3.00px;height:1.00px;background:#888;"></div>
<div class="a" style="left:714.50px;top:415.38px;width:3.00px;height:1.00px;background:#888;"></div>
<div class="a" style="left:714.50px;top:403.16px;width:3.00px;height:1.00px;background:#888;"></div>
<div class="a" style="left:714.50px;top:390.94px;width:3.00px;height:1.00px;background:#888;"></div>
<div class="a" style="left:714.50px;top:378.72px;width:3.00px;height:1.00px;background:#888;"></div>
<div class="a" style="left:714.50px;top:366.50px;width:3.00px;height:1.00px;background:#888;"></div>
<div class="t" style="left:707.05px;top:425.00px;font-size:8.00px;color:#4a4a4a;transform:scaleX(0.930);transform-origin:100% 50%;">0</div>
<div class="t" style="left:707.05px;top:413.00px;font-size:8.00px;color:#4a4a4a;transform:scaleX(0.930);transform-origin:100% 50%;">1</div>
<div class="a" style="left:836.80px;top:425.40px;width:25.10px;height:2.60px;background:#325182;"></div>
<div class="a" style="left:893.00px;top:425.40px;width:25.30px;height:2.60px;background:#325182;"></div>
<div class="a" style="left:921.60px;top:408.50px;width:25.20px;height:19.50px;background:#325182;"></div>
<div class="a" style="left:978.60px;top:361.20px;width:25.20px;height:66.80px;background:#c85f00;"></div>
<div class="a" style="left:692.900px;top:428px;width:321.600px;height:44.500px;overflow:hidden">
<div class="a" style="left:42.40px;top:0.20px;width:1.00px;height:3.30px;background:#777;"></div>
<div class="t" style="left:39.40px;top:6.600px;font-size:7px;color:#4a4a4a;transform-origin:0 0;transform:rotate(-90deg) translate(-31.99px,0) scaleX(1.015);">Atrasadas</div>
<div class="a" style="left:70.80px;top:0.20px;width:1.00px;height:3.30px;background:#777;"></div>
<div class="t" style="left:67.80px;top:6.600px;font-size:7px;color:#4a4a4a;transform-origin:0 0;transform:rotate(-90deg) translate(-41.08px,0) scaleX(1.015);">Vencem hoje</div>
<div class="a" style="left:99.20px;top:0.20px;width:1.00px;height:3.30px;background:#777;"></div>
<div class="t" style="left:96.20px;top:6.600px;font-size:7px;color:#4a4a4a;transform-origin:0 0;transform:rotate(-90deg) translate(-56.48px,0) scaleX(1.015);">Vencem até sexta</div>
<div class="a" style="left:127.60px;top:0.20px;width:1.00px;height:3.30px;background:#777;"></div>
<div class="t" style="left:124.60px;top:6.600px;font-size:7px;color:#4a4a4a;transform-origin:0 0;transform:rotate(-90deg) translate(-53.31px,0) scaleX(1.015);">Próxima semana</div>
<div class="a" style="left:156.00px;top:0.20px;width:1.00px;height:3.30px;background:#777;"></div>
<div class="t" style="left:153.00px;top:6.600px;font-size:7px;color:#4a4a4a;transform-origin:0 0;transform:rotate(-90deg) translate(-55.28px,0) scaleX(1.015);">Em três semanas</div>
<div class="a" style="left:184.40px;top:0.20px;width:1.00px;height:3.30px;background:#777;"></div>
<div class="t" style="left:181.40px;top:6.600px;font-size:7px;color:#4a4a4a;transform-origin:0 0;transform:rotate(-90deg) translate(-63.58px,0) scaleX(1.015);">Em quatro semanas</div>
<div class="a" style="left:212.80px;top:0.20px;width:1.00px;height:3.30px;background:#777;"></div>
<div class="t" style="left:209.80px;top:6.600px;font-size:7px;color:#4a4a4a;transform-origin:0 0;transform:rotate(-90deg) translate(-60.02px,0) scaleX(1.015);">Em cinco semanas</div>
<div class="a" style="left:241.20px;top:0.20px;width:1.00px;height:3.30px;background:#777;"></div>
<div class="t" style="left:238.20px;top:6.600px;font-size:7px;color:#4a4a4a;transform-origin:0 0;transform:rotate(-90deg) translate(-56.07px,0) scaleX(1.015);">Em seis semanas</div>
<div class="a" style="left:269.60px;top:0.20px;width:1.00px;height:3.30px;background:#777;"></div>
<div class="t" style="left:266.60px;top:6.600px;font-size:7px;color:#4a4a4a;transform-origin:0 0;transform:rotate(-90deg) translate(-56.86px,0) scaleX(1.015);">Em sete semanas</div>
<div class="a" style="left:298.00px;top:0.20px;width:1.00px;height:3.30px;background:#777;"></div>
<div class="t" style="left:295.00px;top:6.600px;font-size:7px;color:#4a4a4a;transform-origin:0 0;transform:rotate(-90deg) translate(-71.08px,0) scaleX(1.015);">Mais de sete semanas</div>
</div>
<div class="a" style="left:1015.20px;top:43.00px;width:8.80px;height:431.00px;background:#fafafa;"></div>
<svg style="left:1016.80px;top:48.30px" width="6" height="3" viewBox="0 0 6 3"><path d="M0 2.800h5.200L2.600 0z" fill="#999"/></svg>
<div class="a" style="left:1017.10px;top:54.60px;width:4.30px;height:175.60px;background:#858585;border-radius:2.200px"></div>
<div class="a" style="left:22.00px;top:472.50px;width:1002.00px;height:7.00px;background:#fafafa;"></div>
<div class="a" style="left:33.60px;top:473.40px;width:961.00px;height:5.00px;background:#828282;border-radius:2.500px"></div>
<svg style="left:26.30px;top:473.60px" width="3" height="5" viewBox="0 0 3 5"><path d="M2.600 0v4.600L0 2.300z" fill="#444"/></svg>
<svg style="left:1007.80px;top:473.60px" width="3" height="5" viewBox="0 0 3 5"><path d="M0 0v4.600L2.600 2.300z" fill="#444"/></svg>
<div class="a" style="left:22.00px;top:479.80px;width:1002.00px;height:14.40px;background:#f5f5f5;"></div>
<div class="a" style="left:0.00px;top:494.20px;width:1024.00px;height:2.80px;background:#fff;"></div>
<div class="a" style="left:0.00px;top:470.00px;width:1024.00px;height:25.60px;background:transparent;border-radius:0 0 0 5px;border-bottom:1.300px solid #e2e2e2"></div>
<div class="a" style="left:0.00px;top:470.00px;width:22.00px;height:24.50px;background:#f0f0f0;border-radius:0 0 0 5px"></div>
<div class="a" style="left:982.00px;top:438.50px;width:44.00px;height:35.30px;background:#fafafa;border-radius:2px;box-shadow:0 0 3px rgba(0,0,0,.35)"></div>
<svg style="left:992.10px;top:442.50px" width="22" height="22" viewBox="0 0 22 22"><path d="M11 .200A10.800 10.800 0 0 0 .200 11h6.400A4.400 4.400 0 0 1 11 6.600l2-3.400z" fill="#4a8ff0"/><path d="M2 .800l5.600 .400-4.400 4.600z" fill="#4a8ff0"/><path d="M11 .200A10.800 10.800 0 0 1 19.600 4.400L21.800 2.400v8.600h-8.200l2.400-2.500A4.400 4.400 0 0 0 11 6.600z" fill="#1c3aa9"/><path d="M.200 11.200h6.400A4.400 4.400 0 0 0 14 14.200l4.800 4.600A10.800 10.800 0 0 1 2.300 17.500L.200 19.600z" fill="#b8b8b8"/></svg>
<div class="t" style="left:985.83px;top:468.00px;font-size:3.60px;color:#444;transform:scaleX(0.859);transform-origin:50% 50%;">Privacidade - Termos</div>
<svg style="left:6.90px;top:480.80px" width="10" height="10" viewBox="0 0 10 10"><circle cx="4.700" cy="4.700" r="4.700" fill="#9c9c9c"/><path d="M3.600 2.300l2.500 2.400-2.500 2.400" fill="none" stroke="#fff" stroke-width="1.500"/></svg>
<div class="t" style="left:26.80px;top:485.00px;font-size:6.20px;color:#a6a6a6;transform:scaleX(0.878);transform-origin:0 50%;">LICENCIADO PARA:</div>
<svg style="left:88.70px;top:482.60px" width="8" height="10" viewBox="0 0 8 10"><defs><linearGradient id="cg88" x1="0" y1="0" x2="0" y2="1"><stop offset="0" stop-color="#f0a050"/><stop offset=".45" stop-color="#c8a088"/><stop offset="1" stop-color="#4a7cc0"/></linearGradient></defs><path d="M4 .300A4.900 4.900 0 0 0 7 9.200 4.300 4.300 0 0 1 2.300 6.600 4.600 4.600 0 0 1 4 .300z" fill="url(#cg88)" stroke="url(#cg88)" stroke-width=".900"/></svg>
<div class="t" style="left:97.40px;top:484.00px;font-size:7.800px;font-weight:bold;transform:scaleX(0.798);transform-origin:0 50%"><span style="color:#3468b0">ER</span><span style="color:#f4b43c">PLAN</span></div>
<svg style="left:950.90px;top:482.60px" width="8" height="10" viewBox="0 0 8 10"><defs><linearGradient id="cg950" x1="0" y1="0" x2="0" y2="1"><stop offset="0" stop-color="#f0a050"/><stop offset=".45" stop-color="#c8a088"/><stop offset="1" stop-color="#4a7cc0"/></linearGradient></defs><path d="M4 .300A4.900 4.900 0 0 0 7 9.200 4.300 4.300 0 0 1 2.300 6.600 4.600 4.600 0 0 1 4 .300z" fill="url(#cg950)" stroke="url(#cg950)" stroke-width=".900"/></svg>
<div class="t" style="left:959.60px;top:484.00px;font-size:7.800px;font-weight:bold;transform:scaleX(0.798);transform-origin:0 50%"><span style="color:#3468b0">ER</span><span style="color:#f4b43c">PLAN</span></div>
<div class="a" style="left:633.70px;top:480.50px;width:65.80px;height:13.30px;background:#fde3e7;"></div>
<svg style="left:635.60px;top:482.00px" width="10" height="11" viewBox="0 0 10 11"><path d="M4.700 2.400C3.900 .600 .800 .800 .800 3.400c0 2 2.200 3.400 3.900 5.200C6.400 6.800 8.600 5.400 8.600 3.400c0-2.600-3.100-2.800-3.900-1z" fill="none" stroke="#d03030" stroke-width="1.100"/><path d="M4.400 3.600c1.400 1 2 3 1.200 6.400M6.200 4.600C5 6 4.200 8 4.400 10.400" stroke="#d03030" stroke-width=".900" fill="none"/></svg>
<div class="t" style="left:648.30px;top:483.00px;font-size:8.40px;color:#666;transform:scaleX(0.861);transform-origin:0 50%;-webkit-text-stroke:.2px #666;">Um dia a mais</div>
<div class="a" style="left:705.00px;top:481.50px;width:1.00px;height:12.00px;background:#e4e4e4;"></div>
<div class="a" style="left:753.70px;top:481.50px;width:1.00px;height:12.00px;background:#e4e4e4;"></div>
<div class="a" style="left:806.20px;top:481.50px;width:1.00px;height:12.00px;background:#e4e4e4;"></div>
<div class="a" style="left:864.40px;top:481.50px;width:1.00px;height:12.00px;background:#e4e4e4;"></div>
<div class="a" style="left:894.50px;top:481.50px;width:1.00px;height:12.00px;background:#e4e4e4;"></div>
<svg style="left:710.00px;top:484.30px" width="10" height="7" viewBox="0 0 10 7"><rect width="9.500" height="6.600" rx=".600" fill="#111"/><path d="M1 3.400h2.200l.800-1.400 1.200 2.600.800-1.200h2.400" stroke="#fff" stroke-width=".800" fill="none"/></svg>
<div class="t" style="left:720.80px;top:485.00px;font-size:6.60px;color:#8a8a8a;transform:scaleX(0.883);transform-origin:0 50%;">0.64 Mbps</div>
<svg style="left:758.20px;top:482.90px" width="18" height="9" viewBox="0 0 18 9"><path d="M0 9A9 9 0 0 1 18 9h-4.200A4.800 4.800 0 0 0 4.200 9z" fill="#8aac14"/></svg>
<div class="t" style="left:779.30px;top:485.00px;font-size:6.60px;color:#9a9a9a;transform:scaleX(0.882);transform-origin:0 50%;">59m51s</div>
<svg style="left:812.50px;top:484.20px" width="10" height="7" viewBox="0 0 10 7"><path d="M0 3.400C1.600 1 3.200 .200 5 .200s3.400.800 5 3.200C8.400 5.800 6.800 6.600 5 6.600S1.600 5.800 0 3.400z" fill="#222"/><circle cx="5" cy="3.200" r="1.700" fill="#f3f3f3"/><circle cx="5" cy="3.200" r="1" fill="#222"/></svg>
<div class="t" style="left:825.50px;top:484.00px;font-size:8.20px;color:#666;transform:scaleX(0.887);transform-origin:0 50%;-webkit-text-stroke:.25px #666;">0.9R506</div>
<div class="t" style="left:874.60px;top:484.00px;font-size:8.00px;color:#666;transform:scaleX(0.846);transform-origin:0 50%;">SLA</div>
<svg style="left:897.50px;top:486.70px" width="4" height="3" viewBox="0 0 4 3"><path d="M0 0h4L2 2.600z" fill="#888"/></svg>
<svg style="left:913.20px;top:483.60px" width="8" height="8" viewBox="0 0 8 8"><path d="M1.600 0h5.700v7.700H0V1.600z" fill="#999"/><path d="M2.300 0v7.700" stroke="#ddd" stroke-width=".600"/></svg>
<div class="a" style="left:925.60px;top:484.30px;width:9.50px;height:8.30px;background:#d81e1e;border-radius:1.500px"></div>
<div class="t" style="left:927.07px;top:486.00px;font-size:5.80px;color:#fff;transform:scaleX(0.950);transform-origin:50% 50%;font-weight:bold;">10</div>
<svg style="left:996.00px;top:482.30px" width="10" height="10" viewBox="0 0 10 10"><path d="M.700 3.400V.700h2.700M6.600 .700h2.700v2.700M9.300 6.600v2.700H6.600M3.400 9.300H.700V6.600" fill="none" stroke="#222" stroke-width="1.400"/></svg>
<div class="sph" style="left:1011.00px;top:484.00px;width:7.6px;height:7.6px;background:radial-gradient(circle at 50% 92%,#3ddc3d 0%,rgba(255,255,255,0) 48%),radial-gradient(circle at 50% 50%,#14a814 0%,#14a814 50%,#0c8a0c 100%);box-shadow:inset 0 0 1px rgba(0,0,0,.4)"></div>
<div class="a" style="left:414.50px;top:472.50px;width:90.00px;height:25.00px;background:#fff;"></div>
<div class="t" style="left:417.00px;top:474.00px;font-size:9.40px;color:#222;transform:scaleX(0.772);transform-origin:0 50%;font-weight:bold;">Unidade V</div>
<div class="t" style="left:417.300px;top:486.00px;font-size:9.400px;color:#333;transform:scaleX(0.796);transform-origin:0 50%"><i>Expirado</i> <b>0</b> Treinamentos</div>
<div class="a" style="left:73.00px;top:80.00px;width:846.60px;height:335.50px;background:#fff;box-shadow:1.200px .500px 1.200px rgba(0,0,0,.2);border-bottom:1.200px solid #efefef"></div>
<div class="a" style="left:73.00px;top:80.00px;width:846.60px;height:15.50px;background:#f2f2f2;"></div>
<div class="a" style="left:921.00px;top:354.50px;width:1.90px;height:58.30px;background:#ebccb4;"></div>
<svg style="left:77.80px;top:82.50px" width="6" height="8" viewBox="0 0 6 8"><rect x=".500" y="1" width="5" height="6.600" rx="1.200" fill="#a8a8a8" stroke="#4c4c4c" stroke-width="1"/><path d="M.800 1.500Q3 -.600 5.200 1.500z" fill="#4c4c4c"/><path d="M2.100 3v3.400M3.900 3v3.400" stroke="#6a6a6a" stroke-width=".700"/></svg>
<svg style="left:896.60px;top:82.60px" width="9" height="9" viewBox="0 0 9 9"><circle cx="4.200" cy="4.200" r="3.500" fill="none" stroke="#b4b4b4" stroke-width="1.100"/><path d="M1.800 1.800l4.800 4.800" stroke="#b4b4b4" stroke-width="1.100"/></svg>
<svg style="left:907.80px;top:82.60px" width="9" height="9" viewBox="0 0 9 9"><circle cx="4.200" cy="4.200" r="3.900" fill="#bcbcbc"/><path d="M2.600 2.600l3.200 3.200M5.800 2.600L2.600 5.800" stroke="#fff" stroke-width="1.100"/></svg>
<div class="a" style="left:78.00px;top:98.00px;width:836.00px;height:12.00px;background:#fff;border:1px solid #e8e8e8"></div>
<div class="t" style="left:82.00px;top:100.00px;font-size:7.20px;color:#8c8c8c;transform:scaleX(0.887);transform-origin:0 50%;">Procurar</div>
<svg style="left:904.30px;top:100.20px" width="8" height="8" viewBox="0 0 8 8"><circle cx="3" cy="3" r="2.300" fill="none" stroke="#999" stroke-width=".900"/><path d="M4.700 4.700L7 7" stroke="#999" stroke-width="1.200"/></svg>
<div class="a" style="left:74.00px;top:113.00px;width:844.30px;height:18.90px;background:#f5f5f5;border-bottom:1px solid #e2e2e2"></div>
<div class="a" style="left:92.50px;top:113.00px;width:1.00px;height:18.50px;background:#dcdcdc;"></div>
<div class="a" style="left:269.70px;top:113.00px;width:1.00px;height:18.50px;background:#dcdcdc;"></div>
<div class="a" style="left:447.00px;top:113.00px;width:1.00px;height:18.50px;background:#dcdcdc;"></div>
<div class="a" style="left:623.20px;top:113.00px;width:1.00px;height:18.50px;background:#dcdcdc;"></div>
<div class="a" style="left:800.20px;top:113.00px;width:1.00px;height:18.50px;background:#dcdcdc;"></div>
<div class="a" style="left:876.30px;top:113.00px;width:1.00px;height:18.50px;background:#dcdcdc;"></div>
<div class="a" style="left:896.90px;top:113.00px;width:1.00px;height:18.50px;background:#dcdcdc;"></div>
<svg style="left:78.30px;top:118.20px" width="9" height="7" viewBox="0 0 9 7"><g fill="#333"><circle cx="4.400" cy="1" r="1.050"/><path d="M2.900 3.700c0-2.200 3-2.200 3 0v.800H2.900z"/><circle cx="2.200" cy="3.300" r="1.350"/><circle cx="6.600" cy="3.300" r="1.350"/><path d="M0 6.500V5.600c0-2 4.400-2 4.400 0v.900z"/><path d="M4.400 6.500V5.600c0-2 4.400-2 4.400 0v.900z"/></g></svg>
<div class="t" style="left:98.80px;top:118.00px;font-size:7.60px;color:#6a6a6a;transform:scaleX(0.863);transform-origin:0 50%;">Curso</div>
<div class="t" style="left:275.90px;top:118.00px;font-size:7.60px;color:#6a6a6a;transform:scaleX(0.917);transform-origin:0 50%;">Tipo</div>
<div class="t" style="left:452.90px;top:118.00px;font-size:7.60px;color:#6a6a6a;transform:scaleX(0.931);transform-origin:0 50%;">Validade</div>
<div class="t" style="left:629.00px;top:118.00px;font-size:7.60px;color:#6a6a6a;transform:scaleX(0.921);transform-origin:0 50%;">Norma</div>
<div class="t" style="left:815.57px;top:118.00px;font-size:7.60px;color:#6a6a6a;transform:scaleX(0.895);transform-origin:50% 50%;-webkit-text-stroke:.25px #6a6a6a;">Carga horária</div>
<svg style="left:882.90px;top:117.20px" width="9" height="9" viewBox="0 0 9 9"><path d="M0 4h1.900v4.600H0z M2.500 4.200C3.600 3.200 4.100 2 4.200 .500c1.300-.200 1.800 1.300 1.200 3h2.500c1 0 1.100 1.200.500 1.500.500.400.400 1.100-.100 1.400.300.500.100 1-.300 1.200.200.600-.200 1-.800 1H4.300c-.700 0-1.200-.300-1.800-.500z" fill="#111"/></svg>
<svg style="left:903.50px;top:117.00px" width="9" height="9" viewBox="0 0 9 9"><g transform="translate(0,9) scale(1,-1)"><path d="M0 4h1.900v4.600H0z M2.500 4.200C3.600 3.200 4.100 2 4.200 .500c1.300-.200 1.800 1.300 1.200 3h2.500c1 0 1.100 1.200.500 1.500.500.400.400 1.100-.100 1.400.300.500.100 1-.300 1.200.200.600-.200 1-.800 1H4.300c-.700 0-1.200-.300-1.800-.500z" fill="#111"/></g></svg>
<div class="a" style="left:74.00px;top:131.90px;width:844.30px;height:12.75px;background:#fff;border-bottom:1px solid #f1f1f1"></div>
<svg style="left:79.30px;top:134.00px" width="9" height="7" viewBox="0 0 9 7"><g fill="#333"><circle cx="4.400" cy="1" r="1.050"/><path d="M2.900 3.700c0-2.200 3-2.200 3 0v.800H2.900z"/><circle cx="2.200" cy="3.300" r="1.350"/><circle cx="6.600" cy="3.300" r="1.350"/><path d="M0 6.500V5.600c0-2 4.400-2 4.400 0v.900z"/><path d="M4.400 6.500V5.600c0-2 4.400-2 4.400 0v.900z"/></g></svg>
<div class="t" style="left:98.70px;top:134.00px;font-size:7.70px;color:#3a3a3a;transform:scaleX(0.894);transform-origin:0 50%;">NR12</div>
<div class="t" style="left:275.90px;top:134.00px;font-size:7.70px;color:#3a3a3a;transform:scaleX(0.880);transform-origin:0 50%;">SST</div>
<div class="t" style="left:452.90px;top:134.00px;font-size:7.70px;color:#3a3a3a;transform:scaleX(0.925);transform-origin:0 50%;">365</div>
<div class="t" style="left:629.00px;top:134.00px;font-size:7.70px;color:#3a3a3a;transform:scaleX(0.847);transform-origin:0 50%;">Não se aplica</div>
<div class="t" style="left:834.52px;top:134.00px;font-size:7.70px;color:#3a3a3a;transform:scaleX(0.925);transform-origin:50% 50%;">32</div>
<div class="a" style="left:877.30px;top:131.90px;width:20.30px;height:12.80px;background:#008000;"></div>
<div class="a" style="left:897.60px;top:131.90px;width:20.60px;height:12.80px;background:#ae0000;"></div>
<div class="a" style="left:877.30px;top:131.80px;width:41.00px;height:0.80px;background:rgba(255,255,255,.38);"></div>
<div class="t" style="left:885.26px;top:134.00px;font-size:7.70px;color:#fff;transform:scaleX(0.925);transform-origin:50% 50%;">4</div>
<div class="t" style="left:905.76px;top:134.00px;font-size:7.70px;color:#fff;transform:scaleX(0.925);transform-origin:50% 50%;">0</div>
<div class="a" style="left:74.00px;top:144.65px;width:844.30px;height:12.75px;background:#f7f7f7;border-bottom:1px solid #f1f1f1"></div>
<svg style="left:79.30px;top:146.75px" width="9" height="7" viewBox="0 0 9 7"><g fill="#333"><circle cx="4.400" cy="1" r="1.050"/><path d="M2.900 3.700c0-2.200 3-2.200 3 0v.800H2.900z"/><circle cx="2.200" cy="3.300" r="1.350"/><circle cx="6.600" cy="3.300" r="1.350"/><path d="M0 6.500V5.600c0-2 4.400-2 4.400 0v.900z"/><path d="M4.400 6.500V5.600c0-2 4.400-2 4.400 0v.900z"/></g></svg>
<div class="t" style="left:98.70px;top:147.00px;font-size:7.70px;color:#3a3a3a;transform:scaleX(0.837);transform-origin:0 50%;">CIPISTA</div>
<div class="t" style="left:275.90px;top:147.00px;font-size:7.70px;color:#3a3a3a;transform:scaleX(0.880);transform-origin:0 50%;">SST</div>
<div class="t" style="left:452.90px;top:147.00px;font-size:7.70px;color:#3a3a3a;transform:scaleX(0.925);transform-origin:0 50%;">250</div>
<div class="t" style="left:629.00px;top:147.00px;font-size:7.70px;color:#3a3a3a;transform:scaleX(0.899);transform-origin:0 50%;">NR-16</div>
<div class="t" style="left:834.52px;top:147.00px;font-size:7.70px;color:#3a3a3a;transform:scaleX(0.925);transform-origin:50% 50%;">80</div>
<div class="a" style="left:877.30px;top:144.65px;width:20.30px;height:12.80px;background:#008000;"></div>
<div class="a" style="left:897.60px;top:144.65px;width:20.60px;height:12.80px;background:#ae0000;"></div>
<div class="a" style="left:877.30px;top:144.55px;width:41.00px;height:0.80px;background:rgba(255,255,255,.38);"></div>
<div class="t" style="left:885.26px;top:147.00px;font-size:7.70px;color:#fff;transform:scaleX(0.925);transform-origin:50% 50%;">9</div>
<div class="t" style="left:905.76px;top:147.00px;font-size:7.70px;color:#fff;transform:scaleX(0.925);transform-origin:50% 50%;">0</div>
<div class="a" style="left:74.00px;top:157.40px;width:844.30px;height:12.75px;background:#fff;border-bottom:1px solid #f1f1f1"></div>
<svg style="left:79.30px;top:159.50px" width="9" height="7" viewBox="0 0 9 7"><g fill="#333"><circle cx="4.400" cy="1" r="1.050"/><path d="M2.900 3.700c0-2.200 3-2.200 3 0v.800H2.900z"/><circle cx="2.200" cy="3.300" r="1.350"/><circle cx="6.600" cy="3.300" r="1.350"/><path d="M0 6.500V5.600c0-2 4.400-2 4.400 0v.900z"/><path d="M4.400 6.500V5.600c0-2 4.400-2 4.400 0v.900z"/></g></svg>
<div class="t" style="left:98.70px;top:160.00px;font-size:7.70px;color:#3a3a3a;transform:scaleX(0.893);transform-origin:0 50%;">NR 34</div>
<div class="t" style="left:275.90px;top:160.00px;font-size:7.70px;color:#3a3a3a;transform:scaleX(0.880);transform-origin:0 50%;">OP</div>
<div class="t" style="left:452.90px;top:160.00px;font-size:7.70px;color:#3a3a3a;transform:scaleX(0.925);transform-origin:0 50%;">30</div>
<div class="t" style="left:832.38px;top:160.00px;font-size:7.70px;color:#3a3a3a;transform:scaleX(0.925);transform-origin:50% 50%;">525</div>
<div class="a" style="left:877.30px;top:157.40px;width:20.30px;height:12.80px;background:#008000;"></div>
<div class="a" style="left:897.60px;top:157.40px;width:20.60px;height:12.80px;background:#ae0000;"></div>
<div class="a" style="left:877.30px;top:157.30px;width:41.00px;height:0.80px;background:rgba(255,255,255,.38);"></div>
<div class="t" style="left:885.26px;top:160.00px;font-size:7.70px;color:#fff;transform:scaleX(0.925);transform-origin:50% 50%;">0</div>
<div class="t" style="left:905.76px;top:160.00px;font-size:7.70px;color:#fff;transform:scaleX(0.925);transform-origin:50% 50%;">2</div>
<div class="a" style="left:74.00px;top:170.15px;width:844.30px;height:12.75px;background:#f7f7f7;border-bottom:1px solid #f1f1f1"></div>
<svg style="left:79.30px;top:172.25px" width="9" height="7" viewBox="0 0 9 7"><g fill="#333"><circle cx="4.400" cy="1" r="1.050"/><path d="M2.900 3.700c0-2.200 3-2.200 3 0v.800H2.900z"/><circle cx="2.200" cy="3.300" r="1.350"/><circle cx="6.600" cy="3.300" r="1.350"/><path d="M0 6.500V5.600c0-2 4.400-2 4.400 0v.900z"/><path d="M4.400 6.500V5.600c0-2 4.400-2 4.400 0v.900z"/></g></svg>
<div class="t" style="left:98.70px;top:173.00px;font-size:7.70px;color:#3a3a3a;transform:scaleX(0.834);transform-origin:0 50%;">INTEGRAÇÃO III</div>
<div class="t" style="left:275.90px;top:173.00px;font-size:7.70px;color:#3a3a3a;transform:scaleX(0.880);transform-origin:0 50%;">OP</div>
<div class="t" style="left:452.90px;top:173.00px;font-size:7.70px;color:#3a3a3a;transform:scaleX(0.925);transform-origin:0 50%;">3</div>
<div class="t" style="left:834.52px;top:173.00px;font-size:7.70px;color:#3a3a3a;transform:scaleX(0.925);transform-origin:50% 50%;">33</div>
<div class="a" style="left:877.30px;top:170.15px;width:20.30px;height:12.80px;background:#008000;"></div>
<div class="a" style="left:897.60px;top:170.15px;width:20.60px;height:12.80px;background:#ae0000;"></div>
<div class="a" style="left:877.30px;top:170.05px;width:41.00px;height:0.80px;background:rgba(255,255,255,.38);"></div>
<div class="t" style="left:885.26px;top:173.00px;font-size:7.70px;color:#fff;transform:scaleX(0.925);transform-origin:50% 50%;">0</div>
<div class="t" style="left:905.76px;top:173.00px;font-size:7.70px;color:#fff;transform:scaleX(0.925);transform-origin:50% 50%;">1</div>
<div class="a" style="left:74.00px;top:182.90px;width:844.30px;height:12.75px;background:#fff;border-bottom:1px solid #f1f1f1"></div>
<svg style="left:79.30px;top:185.00px" width="9" height="7" viewBox="0 0 9 7"><g fill="#333"><circle cx="4.400" cy="1" r="1.050"/><path d="M2.900 3.700c0-2.200 3-2.200 3 0v.800H2.900z"/><circle cx="2.200" cy="3.300" r="1.350"/><circle cx="6.600" cy="3.300" r="1.350"/><path d="M0 6.500V5.600c0-2 4.400-2 4.400 0v.900z"/><path d="M4.400 6.500V5.600c0-2 4.400-2 4.400 0v.900z"/></g></svg>
<div class="t" style="left:98.70px;top:185.00px;font-size:7.70px;color:#3a3a3a;transform:scaleX(0.892);transform-origin:0 50%;">PSG - 0001</div>
<div class="t" style="left:275.90px;top:185.00px;font-size:7.70px;color:#3a3a3a;transform:scaleX(0.880);transform-origin:0 50%;">RL</div>
<div class="t" style="left:452.90px;top:185.00px;font-size:7.70px;color:#3a3a3a;transform:scaleX(0.925);transform-origin:0 50%;">365</div>
<div class="t" style="left:629.00px;top:185.00px;font-size:7.70px;color:#3a3a3a;transform:scaleX(0.829);transform-origin:0 50%;">ISO</div>
<div class="t" style="left:836.66px;top:185.00px;font-size:7.70px;color:#3a3a3a;transform:scaleX(0.925);transform-origin:50% 50%;">8</div>
<div class="a" style="left:877.30px;top:182.90px;width:20.30px;height:12.80px;background:#008000;"></div>
<div class="a" style="left:897.60px;top:182.90px;width:20.60px;height:12.80px;background:#ae0000;"></div>
<div class="a" style="left:877.30px;top:182.80px;width:41.00px;height:0.80px;background:rgba(255,255,255,.38);"></div>
<div class="t" style="left:885.26px;top:185.00px;font-size:7.70px;color:#fff;transform:scaleX(0.925);transform-origin:50% 50%;">1</div>
<div class="t" style="left:905.76px;top:185.00px;font-size:7.70px;color:#fff;transform:scaleX(0.925);transform-origin:50% 50%;">0</div>
<div class="a" style="left:74.00px;top:195.65px;width:844.30px;height:12.75px;background:#f7f7f7;border-bottom:1px solid #f1f1f1"></div>
<svg style="left:79.30px;top:197.75px" width="9" height="7" viewBox="0 0 9 7"><g fill="#333"><circle cx="4.400" cy="1" r="1.050"/><path d="M2.900 3.700c0-2.200 3-2.200 3 0v.800H2.900z"/><circle cx="2.200" cy="3.300" r="1.350"/><circle cx="6.600" cy="3.300" r="1.350"/><path d="M0 6.500V5.600c0-2 4.400-2 4.400 0v.900z"/><path d="M4.400 6.500V5.600c0-2 4.400-2 4.400 0v.900z"/></g></svg>
<div class="t" style="left:98.70px;top:198.00px;font-size:7.70px;color:#3a3a3a;transform:scaleX(0.883);transform-origin:0 50%;">NR-289 - Multas e Penalidades</div>
<div class="t" style="left:275.90px;top:198.00px;font-size:7.70px;color:#3a3a3a;transform:scaleX(0.880);transform-origin:0 50%;">SST</div>
<div class="t" style="left:452.90px;top:198.00px;font-size:7.70px;color:#3a3a3a;transform:scaleX(0.925);transform-origin:0 50%;">730</div>
<div class="t" style="left:629.00px;top:198.00px;font-size:7.70px;color:#3a3a3a;transform:scaleX(0.848);transform-origin:0 50%;">NR-28 FISCALIZAÇÃO E PENALIDADES</div>
<div class="t" style="left:836.66px;top:198.00px;font-size:7.70px;color:#3a3a3a;transform:scaleX(0.925);transform-origin:50% 50%;">2</div>
<div class="a" style="left:877.30px;top:195.65px;width:20.30px;height:12.80px;background:#008000;"></div>
<div class="a" style="left:897.60px;top:195.65px;width:20.60px;height:12.80px;background:#ae0000;"></div>
<div class="a" style="left:877.30px;top:195.55px;width:41.00px;height:0.80px;background:rgba(255,255,255,.38);"></div>
<div class="t" style="left:885.26px;top:198.00px;font-size:7.70px;color:#fff;transform:scaleX(0.925);transform-origin:50% 50%;">1</div>
<div class="t" style="left:905.76px;top:198.00px;font-size:7.70px;color:#fff;transform:scaleX(0.925);transform-origin:50% 50%;">0</div>
<div class="a" style="left:74.00px;top:208.40px;width:844.30px;height:12.75px;background:#fff;border-bottom:1px solid #f1f1f1"></div>
<svg style="left:79.30px;top:210.50px" width="9" height="7" viewBox="0 0 9 7"><g fill="#333"><circle cx="4.400" cy="1" r="1.050"/><path d="M2.900 3.700c0-2.200 3-2.200 3 0v.800H2.900z"/><circle cx="2.200" cy="3.300" r="1.350"/><circle cx="6.600" cy="3.300" r="1.350"/><path d="M0 6.500V5.600c0-2 4.400-2 4.400 0v.900z"/><path d="M4.400 6.500V5.600c0-2 4.400-2 4.400 0v.900z"/></g></svg>
<div class="t" style="left:98.70px;top:211.00px;font-size:7.70px;color:#3a3a3a;transform:scaleX(0.874);transform-origin:0 50%;">NR11 - Empilhadeira - IFCO</div>
<div class="t" style="left:275.90px;top:211.00px;font-size:7.70px;color:#3a3a3a;transform:scaleX(0.880);transform-origin:0 50%;">OP</div>
<div class="t" style="left:452.90px;top:211.00px;font-size:7.70px;color:#3a3a3a;transform:scaleX(0.925);transform-origin:0 50%;">365</div>
<div class="t" style="left:629.00px;top:211.00px;font-size:7.70px;color:#3a3a3a;transform:scaleX(0.845);transform-origin:0 50%;">NR-11 TRANSPORTE, MOVIMENTAÇÃO, ARMAZEN...</div>
<div class="t" style="left:836.66px;top:211.00px;font-size:7.70px;color:#3a3a3a;transform:scaleX(0.925);transform-origin:50% 50%;">8</div>
<div class="a" style="left:877.30px;top:208.40px;width:20.30px;height:12.80px;background:#008000;"></div>
<div class="a" style="left:897.60px;top:208.40px;width:20.60px;height:12.80px;background:#ae0000;"></div>
<div class="a" style="left:877.30px;top:208.30px;width:41.00px;height:0.80px;background:rgba(255,255,255,.38);"></div>
<div class="t" style="left:885.26px;top:211.00px;font-size:7.70px;color:#fff;transform:scaleX(0.925);transform-origin:50% 50%;">1</div>
<div class="t" style="left:905.76px;top:211.00px;font-size:7.70px;color:#fff;transform:scaleX(0.925);transform-origin:50% 50%;">0</div>
<div class="a" style="left:74.00px;top:221.15px;width:844.30px;height:12.75px;background:#f7f7f7;border-bottom:1px solid #f1f1f1"></div>
<svg style="left:79.30px;top:223.25px" width="9" height="7" viewBox="0 0 9 7"><g fill="#333"><circle cx="4.400" cy="1" r="1.050"/><path d="M2.900 3.700c0-2.200 3-2.200 3 0v.800H2.900z"/><circle cx="2.200" cy="3.300" r="1.350"/><circle cx="6.600" cy="3.300" r="1.350"/><path d="M0 6.500V5.600c0-2 4.400-2 4.400 0v.900z"/><path d="M4.400 6.500V5.600c0-2 4.400-2 4.400 0v.900z"/></g></svg>
<div class="t" style="left:98.70px;top:224.00px;font-size:7.70px;color:#3a3a3a;transform:scaleX(0.850);transform-origin:0 50%;">BR.SG.001.01 -Lavagem IFCO</div>
<div class="t" style="left:275.90px;top:224.00px;font-size:7.70px;color:#3a3a3a;transform:scaleX(0.880);transform-origin:0 50%;">OP</div>
<div class="t" style="left:452.90px;top:224.00px;font-size:7.70px;color:#3a3a3a;transform:scaleX(0.925);transform-origin:0 50%;">730</div>
<div class="t" style="left:629.00px;top:224.00px;font-size:7.70px;color:#3a3a3a;transform:scaleX(0.847);transform-origin:0 50%;">Não se aplica</div>
<div class="t" style="left:836.66px;top:224.00px;font-size:7.70px;color:#3a3a3a;transform:scaleX(0.925);transform-origin:50% 50%;">3</div>
<div class="a" style="left:877.30px;top:221.15px;width:20.30px;height:12.80px;background:#008000;"></div>
<div class="a" style="left:897.60px;top:221.15px;width:20.60px;height:12.80px;background:#ae0000;"></div>
<div class="a" style="left:877.30px;top:221.05px;width:41.00px;height:0.80px;background:rgba(255,255,255,.38);"></div>
<div class="t" style="left:885.26px;top:224.00px;font-size:7.70px;color:#fff;transform:scaleX(0.925);transform-origin:50% 50%;">3</div>
<div class="t" style="left:905.76px;top:224.00px;font-size:7.70px;color:#fff;transform:scaleX(0.925);transform-origin:50% 50%;">0</div>
<div class="a" style="left:74.00px;top:233.90px;width:844.30px;height:12.75px;background:#fff;border-bottom:1px solid #f1f1f1"></div>
<svg style="left:79.30px;top:236.00px" width="9" height="7" viewBox="0 0 9 7"><g fill="#333"><circle cx="4.400" cy="1" r="1.050"/><path d="M2.900 3.700c0-2.200 3-2.200 3 0v.800H2.900z"/><circle cx="2.200" cy="3.300" r="1.350"/><circle cx="6.600" cy="3.300" r="1.350"/><path d="M0 6.500V5.600c0-2 4.400-2 4.400 0v.900z"/><path d="M4.400 6.500V5.600c0-2 4.400-2 4.400 0v.900z"/></g></svg>
<div class="t" style="left:98.70px;top:236.00px;font-size:7.70px;color:#3a3a3a;transform:scaleX(0.865);transform-origin:0 50%;">EMPILHADEIRA</div>
<div class="t" style="left:275.90px;top:236.00px;font-size:7.70px;color:#3a3a3a;transform:scaleX(0.880);transform-origin:0 50%;">MA</div>
<div class="t" style="left:452.90px;top:236.00px;font-size:7.70px;color:#3a3a3a;transform:scaleX(0.925);transform-origin:0 50%;">365</div>
<div class="t" style="left:629.00px;top:236.00px;font-size:7.70px;color:#3a3a3a;transform:scaleX(0.910);transform-origin:0 50%;">ABNT NBR 8400-5:2019</div>
<div class="t" style="left:834.52px;top:236.00px;font-size:7.70px;color:#3a3a3a;transform:scaleX(0.925);transform-origin:50% 50%;">30</div>
<div class="a" style="left:877.30px;top:233.90px;width:20.30px;height:12.80px;background:#008000;"></div>
<div class="a" style="left:897.60px;top:233.90px;width:20.60px;height:12.80px;background:#ae0000;"></div>
<div class="a" style="left:877.30px;top:233.80px;width:41.00px;height:0.80px;background:rgba(255,255,255,.38);"></div>
<div class="t" style="left:885.26px;top:236.00px;font-size:7.70px;color:#fff;transform:scaleX(0.925);transform-origin:50% 50%;">3</div>
<div class="t" style="left:905.76px;top:236.00px;font-size:7.70px;color:#fff;transform:scaleX(0.925);transform-origin:50% 50%;">0</div>
<div class="a" style="left:74.00px;top:246.65px;width:844.30px;height:12.75px;background:#f7f7f7;border-bottom:1px solid #f1f1f1"></div>
<svg style="left:79.30px;top:248.75px" width="9" height="7" viewBox="0 0 9 7"><g fill="#333"><circle cx="4.400" cy="1" r="1.050"/><path d="M2.900 3.700c0-2.200 3-2.200 3 0v.800H2.900z"/><circle cx="2.200" cy="3.300" r="1.350"/><circle cx="6.600" cy="3.300" r="1.350"/><path d="M0 6.500V5.600c0-2 4.400-2 4.400 0v.900z"/><path d="M4.400 6.500V5.600c0-2 4.400-2 4.400 0v.900z"/></g></svg>
<div class="t" style="left:98.70px;top:249.00px;font-size:7.70px;color:#3a3a3a;transform:scaleX(0.935);transform-origin:0 50%;">Nr35</div>
<div class="t" style="left:275.90px;top:249.00px;font-size:7.70px;color:#3a3a3a;transform:scaleX(0.880);transform-origin:0 50%;">SST</div>
<div class="t" style="left:452.90px;top:249.00px;font-size:7.70px;color:#3a3a3a;transform:scaleX(0.925);transform-origin:0 50%;">730</div>
<div class="t" style="left:629.00px;top:249.00px;font-size:7.70px;color:#3a3a3a;transform:scaleX(0.847);transform-origin:0 50%;">Não se aplica</div>
<div class="t" style="left:836.66px;top:249.00px;font-size:7.70px;color:#3a3a3a;transform:scaleX(0.925);transform-origin:50% 50%;">8</div>
<div class="a" style="left:877.30px;top:246.65px;width:20.30px;height:12.80px;background:#008000;"></div>
<div class="a" style="left:897.60px;top:246.65px;width:20.60px;height:12.80px;background:#ae0000;"></div>
<div class="a" style="left:877.30px;top:246.55px;width:41.00px;height:0.80px;background:rgba(255,255,255,.38);"></div>
<div class="t" style="left:885.26px;top:249.00px;font-size:7.70px;color:#fff;transform:scaleX(0.925);transform-origin:50% 50%;">1</div>
<div class="t" style="left:905.76px;top:249.00px;font-size:7.70px;color:#fff;transform:scaleX(0.925);transform-origin:50% 50%;">0</div>
<div class="a" style="left:74.00px;top:259.40px;width:844.30px;height:12.75px;background:#fff;border-bottom:1px solid #f1f1f1"></div>
<svg style="left:79.30px;top:261.50px" width="9" height="7" viewBox="0 0 9 7"><g fill="#333"><circle cx="4.400" cy="1" r="1.050"/><path d="M2.900 3.700c0-2.200 3-2.200 3 0v.800H2.900z"/><circle cx="2.200" cy="3.300" r="1.350"/><circle cx="6.600" cy="3.300" r="1.350"/><path d="M0 6.500V5.600c0-2 4.400-2 4.400 0v.900z"/><path d="M4.400 6.500V5.600c0-2 4.400-2 4.400 0v.900z"/></g></svg>
<div class="t" style="left:98.70px;top:262.00px;font-size:7.70px;color:#3a3a3a;transform:scaleX(0.874);transform-origin:0 50%;">NR10</div>
<div class="t" style="left:275.90px;top:262.00px;font-size:7.70px;color:#3a3a3a;transform:scaleX(0.880);transform-origin:0 50%;">OP</div>
<div class="t" style="left:452.90px;top:262.00px;font-size:7.70px;color:#3a3a3a;transform:scaleX(0.925);transform-origin:0 50%;">365</div>
<div class="t" style="left:629.00px;top:262.00px;font-size:7.70px;color:#3a3a3a;transform:scaleX(0.894);transform-origin:0 50%;">ISO 18001</div>
<div class="t" style="left:836.66px;top:262.00px;font-size:7.70px;color:#3a3a3a;transform:scaleX(0.925);transform-origin:50% 50%;">8</div>
<div class="a" style="left:877.30px;top:259.40px;width:20.30px;height:12.80px;background:#008000;"></div>
<div class="a" style="left:897.60px;top:259.40px;width:20.60px;height:12.80px;background:#ae0000;"></div>
<div class="a" style="left:877.30px;top:259.30px;width:41.00px;height:0.80px;background:rgba(255,255,255,.38);"></div>
<div class="t" style="left:885.26px;top:262.00px;font-size:7.70px;color:#fff;transform:scaleX(0.925);transform-origin:50% 50%;">1</div>
<div class="t" style="left:905.76px;top:262.00px;font-size:7.70px;color:#fff;transform:scaleX(0.925);transform-origin:50% 50%;">0</div>
<div class="a" style="left:74.00px;top:272.15px;width:844.30px;height:12.75px;background:#f7f7f7;border-bottom:1px solid #f1f1f1"></div>
<svg style="left:79.30px;top:274.25px" width="9" height="7" viewBox="0 0 9 7"><g fill="#333"><circle cx="4.400" cy="1" r="1.050"/><path d="M2.900 3.700c0-2.200 3-2.200 3 0v.800H2.900z"/><circle cx="2.200" cy="3.300" r="1.350"/><circle cx="6.600" cy="3.300" r="1.350"/><path d="M0 6.500V5.600c0-2 4.400-2 4.400 0v.900z"/><path d="M4.400 6.500V5.600c0-2 4.400-2 4.400 0v.900z"/></g></svg>
<div class="t" style="left:98.70px;top:275.00px;font-size:7.70px;color:#3a3a3a;transform:scaleX(0.874);transform-origin:0 50%;">NR33</div>
<div class="t" style="left:275.90px;top:275.00px;font-size:7.70px;color:#3a3a3a;transform:scaleX(0.880);transform-origin:0 50%;">SST</div>
<div class="t" style="left:452.90px;top:275.00px;font-size:7.70px;color:#3a3a3a;transform:scaleX(0.925);transform-origin:0 50%;">365</div>
<div class="t" style="left:629.00px;top:275.00px;font-size:7.70px;color:#3a3a3a;transform:scaleX(0.847);transform-origin:0 50%;">Não se aplica</div>
<div class="t" style="left:834.52px;top:275.00px;font-size:7.70px;color:#3a3a3a;transform:scaleX(0.925);transform-origin:50% 50%;">64</div>
<div class="a" style="left:877.30px;top:272.15px;width:20.30px;height:12.80px;background:#008000;"></div>
<div class="a" style="left:897.60px;top:272.15px;width:20.60px;height:12.80px;background:#ae0000;"></div>
<div class="a" style="left:877.30px;top:272.05px;width:41.00px;height:0.80px;background:rgba(255,255,255,.38);"></div>
<div class="t" style="left:885.26px;top:275.00px;font-size:7.70px;color:#fff;transform:scaleX(0.925);transform-origin:50% 50%;">5</div>
<div class="t" style="left:905.76px;top:275.00px;font-size:7.70px;color:#fff;transform:scaleX(0.925);transform-origin:50% 50%;">0</div>
<div class="a" style="left:74.00px;top:284.90px;width:844.30px;height:12.75px;background:#fff;border-bottom:1px solid #f1f1f1"></div>
<svg style="left:79.30px;top:287.00px" width="9" height="7" viewBox="0 0 9 7"><g fill="#333"><circle cx="4.400" cy="1" r="1.050"/><path d="M2.900 3.700c0-2.200 3-2.200 3 0v.800H2.900z"/><circle cx="2.200" cy="3.300" r="1.350"/><circle cx="6.600" cy="3.300" r="1.350"/><path d="M0 6.500V5.600c0-2 4.400-2 4.400 0v.900z"/><path d="M4.400 6.500V5.600c0-2 4.400-2 4.400 0v.900z"/></g></svg>
<div class="t" style="left:98.70px;top:287.00px;font-size:7.70px;color:#3a3a3a;transform:scaleX(0.837);transform-origin:0 50%;">SEGURANÇA OFFSHORE</div>
<div class="t" style="left:275.90px;top:287.00px;font-size:7.70px;color:#3a3a3a;transform:scaleX(0.880);transform-origin:0 50%;">QA</div>
<div class="t" style="left:452.90px;top:287.00px;font-size:7.70px;color:#3a3a3a;transform:scaleX(0.925);transform-origin:0 50%;">1</div>
<div class="t" style="left:629.00px;top:287.00px;font-size:7.70px;color:#3a3a3a;transform:scaleX(0.910);transform-origin:0 50%;">ABNT NBR 8400-5:2019</div>
<div class="t" style="left:836.66px;top:287.00px;font-size:7.70px;color:#3a3a3a;transform:scaleX(0.925);transform-origin:50% 50%;">1</div>
<div class="a" style="left:877.30px;top:284.90px;width:20.30px;height:12.80px;background:#008000;"></div>
<div class="a" style="left:897.60px;top:284.90px;width:20.60px;height:12.80px;background:#ae0000;"></div>
<div class="a" style="left:877.30px;top:284.80px;width:41.00px;height:0.80px;background:rgba(255,255,255,.38);"></div>
<div class="t" style="left:885.26px;top:287.00px;font-size:7.70px;color:#fff;transform:scaleX(0.925);transform-origin:50% 50%;">0</div>
<div class="t" style="left:905.76px;top:287.00px;font-size:7.70px;color:#fff;transform:scaleX(0.925);transform-origin:50% 50%;">1</div>
<div class="a" style="left:74.00px;top:297.65px;width:844.30px;height:12.75px;background:#f7f7f7;border-bottom:1px solid #f1f1f1"></div>
<svg style="left:79.30px;top:299.75px" width="9" height="7" viewBox="0 0 9 7"><g fill="#333"><circle cx="4.400" cy="1" r="1.050"/><path d="M2.900 3.700c0-2.200 3-2.200 3 0v.800H2.900z"/><circle cx="2.200" cy="3.300" r="1.350"/><circle cx="6.600" cy="3.300" r="1.350"/><path d="M0 6.500V5.600c0-2 4.400-2 4.400 0v.900z"/><path d="M4.400 6.500V5.600c0-2 4.400-2 4.400 0v.900z"/></g></svg>
<div class="t" style="left:98.70px;top:300.00px;font-size:7.70px;color:#3a3a3a;transform:scaleX(0.958);transform-origin:0 50%;">TESTE TABOCA 22/11</div>
<div class="t" style="left:275.90px;top:300.00px;font-size:7.70px;color:#3a3a3a;transform:scaleX(0.880);transform-origin:0 50%;">OP</div>
<div class="t" style="left:452.90px;top:300.00px;font-size:7.70px;color:#3a3a3a;transform:scaleX(0.925);transform-origin:0 50%;">15</div>
<div class="t" style="left:836.66px;top:300.00px;font-size:7.70px;color:#3a3a3a;transform:scaleX(0.925);transform-origin:50% 50%;">1</div>
<div class="a" style="left:877.30px;top:297.65px;width:20.30px;height:12.80px;background:#008000;"></div>
<div class="a" style="left:897.60px;top:297.65px;width:20.60px;height:12.80px;background:#ae0000;"></div>
<div class="a" style="left:877.30px;top:297.55px;width:41.00px;height:0.80px;background:rgba(255,255,255,.38);"></div>
<div class="t" style="left:885.26px;top:300.00px;font-size:7.70px;color:#fff;transform:scaleX(0.925);transform-origin:50% 50%;">0</div>
<div class="t" style="left:905.76px;top:300.00px;font-size:7.70px;color:#fff;transform:scaleX(0.925);transform-origin:50% 50%;">1</div>
<div class="a" style="left:74.00px;top:310.40px;width:844.30px;height:12.75px;background:#fff;border-bottom:1px solid #f1f1f1"></div>
<svg style="left:79.30px;top:312.50px" width="9" height="7" viewBox="0 0 9 7"><g fill="#333"><circle cx="4.400" cy="1" r="1.050"/><path d="M2.900 3.700c0-2.200 3-2.200 3 0v.800H2.900z"/><circle cx="2.200" cy="3.300" r="1.350"/><circle cx="6.600" cy="3.300" r="1.350"/><path d="M0 6.500V5.600c0-2 4.400-2 4.400 0v.900z"/><path d="M4.400 6.500V5.600c0-2 4.400-2 4.400 0v.900z"/></g></svg>
<div class="t" style="left:98.70px;top:313.00px;font-size:7.70px;color:#3a3a3a;transform:scaleX(0.837);transform-origin:0 50%;">DIREÇÃO DEFENSIVA</div>
<div class="t" style="left:275.90px;top:313.00px;font-size:7.70px;color:#3a3a3a;transform:scaleX(0.880);transform-origin:0 50%;">OP</div>
<div class="t" style="left:452.90px;top:313.00px;font-size:7.70px;color:#3a3a3a;transform:scaleX(0.925);transform-origin:0 50%;">90</div>
<div class="t" style="left:629.00px;top:313.00px;font-size:7.70px;color:#3a3a3a;transform:scaleX(0.847);transform-origin:0 50%;">Não se aplica</div>
<div class="t" style="left:832.38px;top:313.00px;font-size:7.70px;color:#3a3a3a;transform:scaleX(0.925);transform-origin:50% 50%;">800</div>
<div class="a" style="left:877.30px;top:310.40px;width:20.30px;height:12.80px;background:#008000;"></div>
<div class="a" style="left:897.60px;top:310.40px;width:20.60px;height:12.80px;background:#ae0000;"></div>
<div class="a" style="left:877.30px;top:310.30px;width:41.00px;height:0.80px;background:rgba(255,255,255,.38);"></div>
<div class="t" style="left:885.26px;top:313.00px;font-size:7.70px;color:#fff;transform:scaleX(0.925);transform-origin:50% 50%;">8</div>
<div class="t" style="left:905.76px;top:313.00px;font-size:7.70px;color:#fff;transform:scaleX(0.925);transform-origin:50% 50%;">2</div>
<div class="a" style="left:74.00px;top:323.15px;width:844.30px;height:12.75px;background:#f7f7f7;border-bottom:1px solid #f1f1f1"></div>
<svg style="left:79.30px;top:325.25px" width="9" height="7" viewBox="0 0 9 7"><g fill="#333"><circle cx="4.400" cy="1" r="1.050"/><path d="M2.900 3.700c0-2.200 3-2.200 3 0v.800H2.900z"/><circle cx="2.200" cy="3.300" r="1.350"/><circle cx="6.600" cy="3.300" r="1.350"/><path d="M0 6.500V5.600c0-2 4.400-2 4.400 0v.900z"/><path d="M4.400 6.500V5.600c0-2 4.400-2 4.400 0v.900z"/></g></svg>
<div class="t" style="left:98.70px;top:326.00px;font-size:7.70px;color:#3a3a3a;transform:scaleX(0.863);transform-origin:0 50%;">MONTAGEM DE ANDAIMES</div>
<div class="t" style="left:275.90px;top:326.00px;font-size:7.70px;color:#3a3a3a;transform:scaleX(0.880);transform-origin:0 50%;">SST</div>
<div class="t" style="left:452.90px;top:326.00px;font-size:7.70px;color:#3a3a3a;transform:scaleX(0.925);transform-origin:0 50%;">24</div>
<div class="t" style="left:629.00px;top:326.00px;font-size:7.70px;color:#3a3a3a;transform:scaleX(0.839);transform-origin:0 50%;">NR-18 CONDIÇÕES E MEIO AMBIENTE DE TRABAL...</div>
<div class="t" style="left:834.52px;top:326.00px;font-size:7.70px;color:#3a3a3a;transform:scaleX(0.925);transform-origin:50% 50%;">20</div>
<div class="a" style="left:877.30px;top:323.15px;width:20.30px;height:12.80px;background:#008000;"></div>
<div class="a" style="left:897.60px;top:323.15px;width:20.60px;height:12.80px;background:#ae0000;"></div>
<div class="a" style="left:877.30px;top:323.05px;width:41.00px;height:0.80px;background:rgba(255,255,255,.38);"></div>
<div class="t" style="left:885.26px;top:326.00px;font-size:7.70px;color:#fff;transform:scaleX(0.925);transform-origin:50% 50%;">0</div>
<div class="t" style="left:905.76px;top:326.00px;font-size:7.70px;color:#fff;transform:scaleX(0.925);transform-origin:50% 50%;">1</div>
<div class="a" style="left:74.00px;top:379.60px;width:844.50px;height:13.40px;background:#cca4bc;"></div>
<div class="t" style="left:778.70px;top:383.00px;font-size:7.00px;color:#222;transform:scaleX(0.907);transform-origin:0 50%;font-weight:bold;">Total:</div>
<div class="t" style="left:832.54px;top:384.00px;font-size:5.00px;color:#222;transform:scaleX(0.900);transform-origin:50% 50%;font-weight:bold;">1.623</div>
<div class="t" style="left:884.62px;top:384.00px;font-size:5.00px;color:#222;transform:scaleX(0.900);transform-origin:50% 50%;font-weight:bold;">37</div>
<div class="t" style="left:906.51px;top:384.00px;font-size:5.00px;color:#222;transform:scaleX(0.900);transform-origin:50% 50%;font-weight:bold;">8</div>
<svg style="left:79.50px;top:399.30px" width="10" height="11" viewBox="0 0 10 11"><path d="M4.4 1.300L1.2 5.400 4.4 9.500 M8.1 1.300L4.9 5.400 8.1 9.500" fill="none" stroke="#cbcbcb" stroke-width="1.550"/></svg>
<svg style="left:97.00px;top:399.30px" width="10" height="11" viewBox="0 0 10 11"><path d="M4.4 1.300L1.2 5.400 4.4 9.500" fill="none" stroke="#cbcbcb" stroke-width="1.550"/></svg>
<svg style="left:190.80px;top:399.30px" width="10" height="11" viewBox="0 0 10 11"><path d="M1.2 1.300L4.4 5.400 1.2 9.500" fill="none" stroke="#cbcbcb" stroke-width="1.550"/></svg>
<svg style="left:205.30px;top:399.30px" width="10" height="11" viewBox="0 0 10 11"><path d="M1.2 1.300L4.4 5.400 1.2 9.500 M4.9 1.300L8.1 5.400 4.9 9.500" fill="none" stroke="#cbcbcb" stroke-width="1.550"/></svg>
<div class="a" style="left:110.70px;top:400.80px;width:1.00px;height:8.00px;background:#ededed;"></div>
<div class="a" style="left:183.70px;top:400.80px;width:1.00px;height:8.00px;background:#ededed;"></div>
<div class="a" style="left:220.70px;top:400.80px;width:1.00px;height:8.00px;background:#ededed;"></div>
<div class="a" style="left:242.50px;top:400.80px;width:1.00px;height:8.00px;background:#ededed;"></div>
<div class="a" style="left:353.00px;top:400.80px;width:1.00px;height:8.00px;background:#ededed;"></div>
<div class="t" style="left:117.50px;top:401.00px;font-size:7.00px;color:#8a8a8a;transform:scaleX(0.858);transform-origin:0 50%;">Página</div>
<div class="a" style="left:140.50px;top:398.70px;width:20.80px;height:12.00px;background:#fff;border:1px solid #ddd"></div>
<div class="t" style="left:144.30px;top:401.00px;font-size:7.20px;color:#333;transform:scaleX(0.950);transform-origin:0 50%;">1</div>
<div class="t" style="left:168.20px;top:401.00px;font-size:7.00px;color:#8a8a8a;transform:scaleX(0.866);transform-origin:0 50%;">de 1</div>
<svg style="left:227.00px;top:399.80px" width="10" height="10" viewBox="0 0 10 10"><path d="M8.200 5.200A3.700 3.700 0 1 1 6.600 2" fill="none" stroke="#777" stroke-width="1"/><path d="M5.700 .400l3.100 .400-.900 2.800z" fill="#777"/></svg>
<svg style="left:248.00px;top:400.00px" width="10" height="9" viewBox="0 0 10 9"><path d="M0 .900L5.400 0v9L0 8.100z" fill="#222"/><rect x="5.800" y="1.200" width="3.400" height="6.600" fill="none" stroke="#222" stroke-width=".900"/><path d="M5.800 3.400h3.400M5.800 5.600h3.400" stroke="#222" stroke-width=".700"/><path d="M1.500 2.900l2.300 3.200M3.800 2.900L1.500 6.100" stroke="#fff" stroke-width=".900"/></svg>
<div class="t" style="left:259.20px;top:401.00px;font-size:7.00px;color:#4a4a4a;transform:scaleX(0.937);transform-origin:0 50%;-webkit-text-stroke:.2px #4a4a4a;">Exportar</div>
<svg style="left:293.80px;top:399.70px" width="10" height="10" viewBox="0 0 10 10"><circle cx="1.500" cy="8.400" r="1.400" fill="#111"/><path d="M.200 4.600a5.200 5.200 0 0 1 5.200 5.200M.200 1.100a8.700 8.700 0 0 1 8.700 8.700" fill="none" stroke="#111" stroke-width="1.700"/></svg>
<div class="t" style="left:306.00px;top:401.00px;font-size:7.00px;color:#4a4a4a;transform:scaleX(0.893);transform-origin:0 50%;-webkit-text-stroke:.2px #4a4a4a;">Conectar a BI</div>
<svg style="left:600.50px;top:400.80px" width="8" height="8" viewBox="0 0 8 8"><path d="M.800 .800l5.800 5.800M6.600 .800L.800 6.600" stroke="#111" stroke-width="1.700"/></svg>
<div class="t" style="left:610.80px;top:401.00px;font-size:7.00px;color:#5a5a5a;transform:scaleX(0.881);transform-origin:0 50%;">Fechar</div>
<div class="t" style="left:874.34px;top:401.00px;font-size:7.60px;color:#8a8a8a;transform:scaleX(0.838);transform-origin:100% 50%;">1 - 16 de 16</div>
<div class="a" style="left:189px;top:21px;width:26px;height:22.500px;border:2.800px solid #fe0000"></div>
<div class="a" style="left:292.500px;top:47.500px;width:19.500px;height:20.500px;border:2.800px solid #fe0000"></div>
<div class="a" style="left:801px;top:109px;width:75.200px;height:231.700px;border:2.800px solid #fe0000"></div>
<div class="a" style="left:189.10px;top:-0.20px;width:24.80px;height:20.40px;background:#fe0000;border-radius:50%"></div>
<div class="t" style="left:198.55px;top:5.00px;font-size:10.60px;color:#fff;transform:scaleX(1.000);transform-origin:50% 50%;font-weight:bold;">1</div>
<div class="a" style="left:289.30px;top:26.00px;width:24.80px;height:20.40px;background:#fe0000;border-radius:50%"></div>
<div class="t" style="left:298.75px;top:31.00px;font-size:10.60px;color:#fff;transform:scaleX(1.000);transform-origin:50% 50%;font-weight:bold;">2</div>
<div class="a" style="left:825.60px;top:84.60px;width:24.80px;height:20.40px;background:#fe0000;border-radius:50%"></div>
<div class="t" style="left:835.05px;top:90.00px;font-size:10.60px;color:#fff;transform:scaleX(1.000);transform-origin:50% 50%;font-weight:bold;">3</div>
</body></html>
